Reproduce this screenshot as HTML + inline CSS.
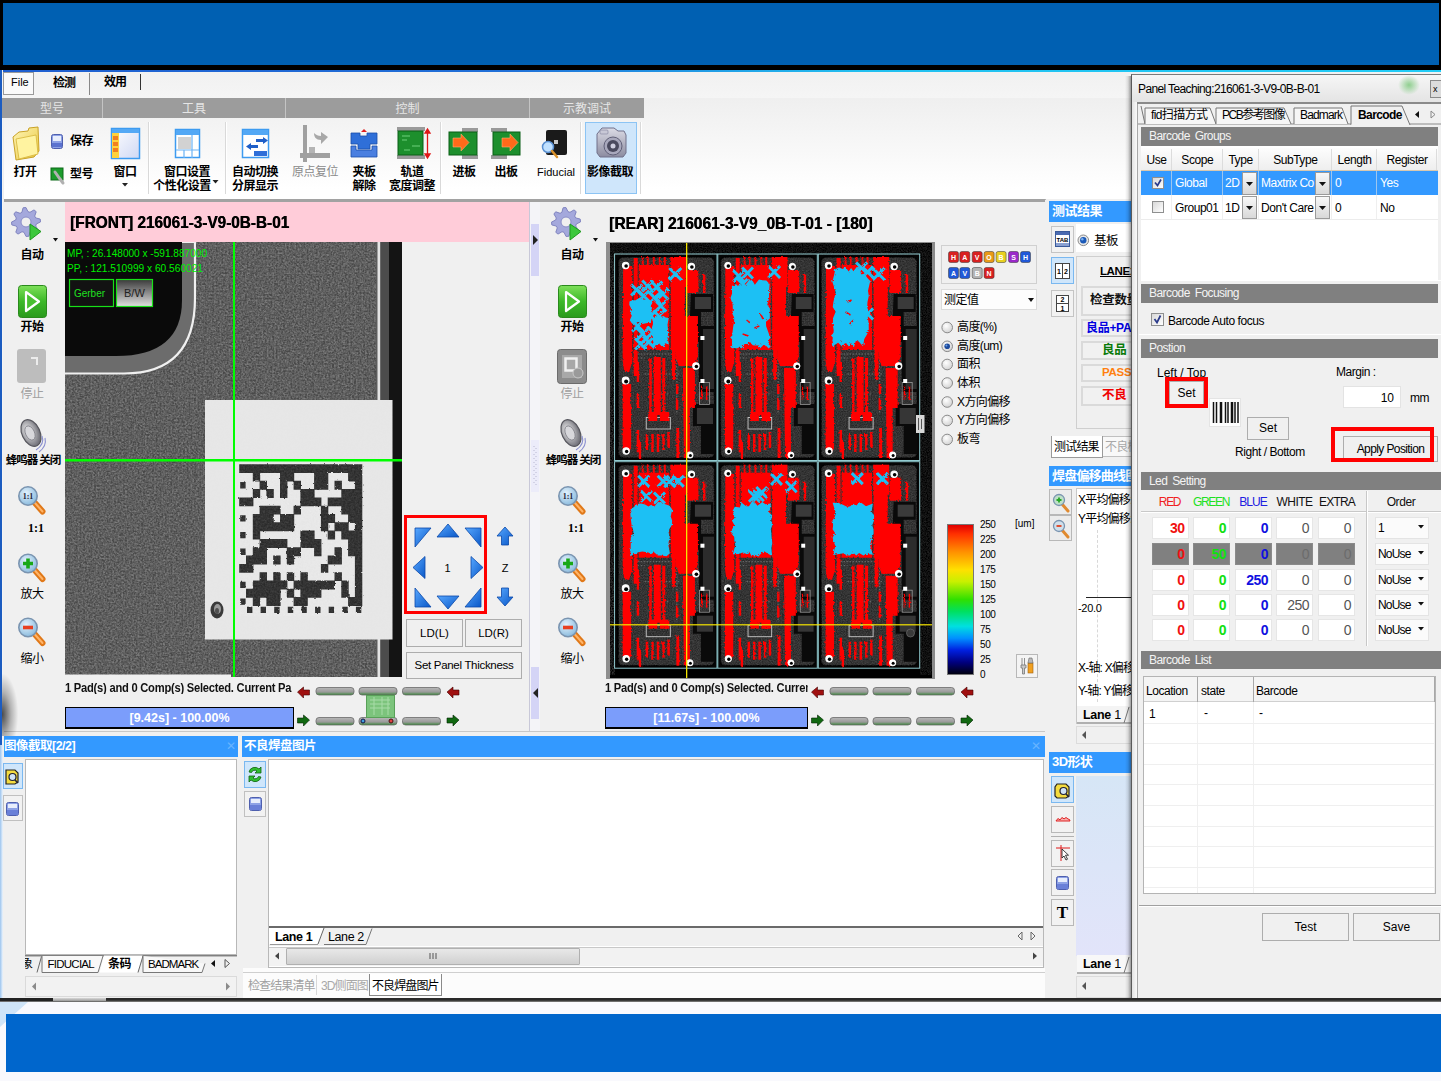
<!DOCTYPE html>
<html lang="zh"><head><meta charset="utf-8"><title>SPI Panel Teaching</title>
<style>
*{box-sizing:border-box;margin:0;padding:0}
html,body{width:1441px;height:1081px;overflow:hidden;background:#f2f2f4}
body{font-family:"Liberation Sans","Noto Sans CJK SC",sans-serif;font-size:12px;color:#000}
#root{position:relative;width:1441px;height:1081px;overflow:hidden;background:#f0f0f0}
.a{position:absolute}
.t{position:absolute;white-space:nowrap;line-height:1}
.c{text-align:center}
svg{position:absolute;overflow:visible}
.ghead{position:absolute;background:#808080;color:#f4f4f4;font-size:12px;line-height:19px;padding-left:8px;letter-spacing:-.55px;word-spacing:2px}
.ptitle{position:absolute;background:#3399ff;color:#fff;font-weight:bold;font-size:12px;line-height:18px;padding-left:3px;white-space:nowrap;overflow:hidden}
.btn{position:absolute;border:1px solid #adadad;background:#f0f0f0;text-align:center;font-size:12px;white-space:nowrap}
.ibox{position:absolute;border:1px solid #e3e3e3;background:#fff;text-align:right;font-size:14px;padding-right:5px;line-height:21px}
.rl{position:absolute;white-space:nowrap;font-size:12px;line-height:14px;text-align:center;transform:translateX(-50%);font-weight:bold;letter-spacing:-.5px}
.rsep{position:absolute;top:122px;width:1px;height:72px;background:#d9d9d9;border-right:1px solid #fff;box-sizing:content-box}
.gh{position:absolute;top:98px;height:20px;background:#9c9c9c;color:#e6e6e6;font-size:12px;line-height:22px;text-align:center;border-right:1px solid #c4c4c4}
.tl{position:absolute;white-space:nowrap;font-size:12px;line-height:14px;text-align:center;transform:translateX(-50%);letter-spacing:-.5px}

</style></head>
<body>
<div id="root">
<!-- 10_frame.html -->
<!-- top / bottom bands -->
<div class="a" style="left:0;top:0;width:1441px;height:70px;background:#000"></div>
<div class="a" style="left:3px;top:3px;width:1436px;height:62px;background:#0060b2"></div>
<div class="a" style="left:3px;top:70px;width:1438px;height:2px;background:linear-gradient(to right,#1f5fd0,#2070d8 35%,#22c0f0 60%,#22ccf6)"></div>
<div class="a" style="left:0;top:70px;width:2px;height:675px;background:#1c5cc0"></div>
<div class="a" style="left:2px;top:72px;width:1px;height:926px;background:#f4f4f4"></div>
<!-- menu bar -->
<div class="a" style="left:4px;top:72px;width:1437px;height:26px;background:linear-gradient(#f1f1f1,#f5f5f5)"></div>
<!-- ribbon bg -->
<div class="a" style="left:4px;top:98px;width:1437px;height:101px;background:linear-gradient(#efefef,#f5f5f5 35%,#ffffff 90%)"></div>
<div class="a" style="left:4px;top:199px;width:1042px;height:3px;background:#a2a2a2"></div>
<!-- main bg -->
<div class="a" style="left:4px;top:202px;width:1128px;height:796px;background:#f0f0f0"></div>
<div class="a" style="left:1045px;top:199px;width:1px;height:533px;background:#b4b4b4"></div>
<!-- bottom -->
<div class="a" style="left:0;top:1002px;width:1441px;height:79px;background:#f9f9fd"></div>
<div class="a" style="left:0;top:998px;width:1441px;height:4px;background:linear-gradient(#2a2a2a 55%,#8a8a8a)"></div>
<div class="a" style="left:6px;top:1014px;width:1435px;height:58px;background:#0066cc"></div>

<!-- 20_ribbon.html -->
<!-- menu -->
<div class="a" style="left:3px;top:72px;width:31px;height:23px;border:1px solid #9a9a9a;background:#fafafa"></div>
<div class="t" style="left:11px;top:77px;font-size:11px">File</div>
<div class="t" style="left:53px;top:77px;font-size:12px;font-weight:bold;letter-spacing:-1px">检测</div>
<div class="t" style="left:104px;top:76px;font-size:12px;font-weight:bold;letter-spacing:-1px">效用</div>
<div class="a" style="left:89px;top:73px;width:1px;height:22px;background:#888"></div>
<div class="a" style="left:140px;top:74px;width:1px;height:16px;background:#333"></div>
<!-- ribbon group headers -->
<div class="gh" style="left:2px;width:101px">型号</div>
<div class="gh" style="left:103px;width:183px">工具</div>
<div class="gh" style="left:286px;width:244px">控制</div>
<div class="gh" style="left:530px;width:114px;border-right:none">示教调试</div>
<!-- separators -->
<div class="rsep" style="left:148px"></div>
<div class="rsep" style="left:225px"></div>
<div class="rsep" style="left:440px"></div>
<div class="rsep" style="left:580px"></div>
<div class="rsep" style="left:640px"></div>
<!-- highlighted button -->
<div class="a" style="left:585px;top:122px;width:52px;height:72px;background:#cfe6fb;border:1px solid #8cc4f4"></div>
<!-- labels -->
<div class="rl" style="left:25px;top:165px">打开</div>
<div class="t" style="left:70px;top:135px;font-size:12px;font-weight:bold;letter-spacing:-.5px">保存</div>
<div class="t" style="left:70px;top:168px;font-size:12px;font-weight:bold;letter-spacing:-.5px">型号</div>
<div class="rl" style="left:125px;top:165px">窗口</div>
<div class="rl" style="left:187px;top:165px">窗口设置</div><div class="rl" style="left:182px;top:179px">个性化设置</div>
<div class="rl" style="left:255px;top:165px">自动切换<br>分屏显示</div>
<div class="rl" style="left:315px;top:165px;color:#8a8a8a;font-weight:normal">原点复位</div>
<div class="rl" style="left:364px;top:165px">夹板<br>解除</div>
<div class="rl" style="left:412px;top:165px">轨道<br>宽度调整</div>
<div class="rl" style="left:464px;top:165px">进板</div>
<div class="rl" style="left:506px;top:165px">出板</div>
<div class="rl" style="left:556px;top:165px;font-weight:normal;font-size:11px;letter-spacing:0">Fiducial</div>
<div class="rl" style="left:610px;top:165px">影像截取</div>
<!-- ribbon icons -->
<svg style="left:0;top:0" width="660" height="200" viewBox="0 0 660 200">
 <defs>
  <linearGradient id="gFold" x1="0" y1="0" x2="1" y2="1"><stop offset="0" stop-color="#fff6b8"/><stop offset="1" stop-color="#e9c63c"/></linearGradient>
  <linearGradient id="gWin" x1="0" y1="0" x2="1" y2="1"><stop offset="0" stop-color="#ffffff"/><stop offset="1" stop-color="#cfd8f4"/></linearGradient>
  <linearGradient id="gCam" x1="0" y1="0" x2="0" y2="1"><stop offset="0" stop-color="#dcdce6"/><stop offset="1" stop-color="#8c8ca0"/></linearGradient>
 </defs>
 <!-- dropdown arrows -->
 <path d="M122 183h6l-3 3.5z" fill="#222"/>
 <path d="M212.500 180h6l-3 3.500z" fill="#222"/>
 <!-- folder -->
 <path d="M13 137l6-5 9-1 1-3 9-1 1 24-5 6-18 3z" fill="url(#gFold)" stroke="#c9a227" stroke-width="1"/>
 <path d="M16 139l20-4 2 19-19 5z" fill="#fff3a0" stroke="#d6b53a" stroke-width=".8"/>
 <!-- save icon -->
 <rect x="51.500" y="134.500" width="11" height="14" rx="2" fill="#8ea2e6" stroke="#4e5fae"/>
 <rect x="53" y="136" width="8" height="5" fill="#e8eefc"/>
 <rect x="52" y="143" width="10" height="4" fill="#5b72cf"/>
 <!-- model icon -->
 <rect x="51" y="168" width="12" height="12" fill="#1c9b2c" stroke="#0c6a18"/>
 <path d="M55 172l5 7 3 4" stroke="#b0b0b0" stroke-width="3" fill="none" stroke-linecap="round"/>
 <!-- window icon -->
 <rect x="111.500" y="128.500" width="28" height="30" fill="url(#gWin)" stroke="#3d9bf0" stroke-width="1.5"/>
 <rect x="112" y="129" width="27" height="4" fill="#53a8f5"/>
 <rect x="112" y="133" width="7" height="25" fill="#ffd23c"/>
 <rect x="113" y="136" width="5" height="4" fill="#f08020"/><rect x="113" y="142" width="5" height="4" fill="#f08020"/><rect x="113" y="148" width="5" height="4" fill="#f08020"/>
 <!-- window settings icon -->
 <rect x="175.500" y="129.500" width="24" height="28" fill="#fff" stroke="#3d9bf0" stroke-width="1.5"/>
 <rect x="176" y="130" width="23" height="5" fill="#53a8f5"/>
 <rect x="178" y="137" width="13" height="12" fill="#d2d2d2"/>
 <path d="M176 150h23M192 135v23M184 150v8" stroke="#6db4f5" stroke-width="1.2"/>
 <!-- auto switch icon -->
 <rect x="242.500" y="129.500" width="26" height="28" fill="#fff" stroke="#3d9bf0" stroke-width="1.5"/>
 <rect x="243" y="130" width="25" height="5" fill="#53a8f5"/>
 <path d="M256 139h7v-2l5 3.500-5 3.500v-2h-7z" fill="#1f5fc8"/>
 <path d="M255 147h-7v2l-5-3.500 5-3.500v2h7z" fill="#1f5fc8" transform="translate(3,1)"/>
 <rect x="254" y="151" width="13" height="5" fill="#2f6fd8"/>
 <!-- origin reset (gray) -->
 <path d="M303 125h4v28h23v5h-23v4h-4v-4h-3v-5h3z" fill="#a0a0a0"/>
 <rect x="309" y="147" width="6" height="6" fill="#b4b4b4"/>
 <path d="M314 141l7-7v4c5 0 7 3 7 7-2-2-4-3-7-3v4z" fill="#a8a8a8" transform="rotate(180 321 139)"/>
 <!-- clamp icon -->
 <path d="M351 133h9v3h7v-3h10v11h-7v5h-12v-5h-7z" fill="#2f6fd8" stroke="#1b4faa" stroke-width=".8"/>
 <path d="M351 146h5v4h16v-4h5v11h-26z" fill="#4a7fe0" stroke="#1b4faa" stroke-width=".8"/>
 <path d="M361 132l3-3 3 3z" fill="#e02020"/>
 <!-- rail width icon -->
 <rect x="397" y="127" width="28" height="4" fill="#9a9a9a"/><rect x="397" y="155" width="28" height="4" fill="#9a9a9a"/>
 <rect x="398" y="131" width="25" height="24" fill="#1d8f2d" stroke="#0b5f17"/>
 <path d="M402 136h8M402 140h5M412 146h8M404 150h6" stroke="#6fd07c" stroke-width="1"/>
 <path d="M427.500 130v27M425 133l2.500-4 2.500 4zM425 154l2.500 4 2.500-4z" stroke="#e01818" fill="#e01818" stroke-width="1.3"/>
 <!-- board in -->
 <rect x="462" y="128" width="16" height="4" fill="#9a9a9a"/><rect x="462" y="155" width="16" height="4" fill="#9a9a9a"/>
 <rect x="449" y="132" width="28" height="23" fill="#1d8f2d" stroke="#0b5f17"/>
 <path d="M453 138h8v-4l8 8.500-8 8.500v-4h-8z" fill="#ff6a1a" stroke="#ffb070" stroke-width=".6"/>
 <!-- board out -->
 <rect x="491" y="128" width="16" height="4" fill="#9a9a9a"/><rect x="491" y="155" width="16" height="4" fill="#9a9a9a"/>
 <rect x="493" y="132" width="27" height="23" fill="#1d8f2d" stroke="#0b5f17"/>
 <path d="M502 138h8v-4l8 8.500-8 8.500v-4h-8z" fill="#ff6a1a" stroke="#ffb070" stroke-width=".6"/>
 <!-- fiducial -->
 <rect x="546" y="130" width="21" height="25" rx="2" fill="#1a1a1a"/>
 <rect x="554" y="140" width="4" height="4" fill="#c8c8c8"/>
 <circle cx="548" cy="147" r="5.500" fill="#bfe0ff" stroke="#5a8fd0" stroke-width="1.5"/>
 <path d="M552 151l5 6" stroke="#d8902a" stroke-width="2.500" stroke-linecap="round"/>
 <!-- camera -->
 <path d="M597 134l5-6h12l4 3h6l2 4v18l-3 4h-23l-3-4z" fill="url(#gCam)" stroke="#70708a" stroke-width="1"/>
 <circle cx="613" cy="146" r="9" fill="#a8a8bc" stroke="#606078"/>
 <circle cx="613" cy="146" r="6" fill="#4a4a5e"/>
 <circle cx="613" cy="146" r="2.500" fill="#d0d0e0"/>
 <rect x="600" y="130" width="8" height="4" rx="1" fill="#c8c8d6" stroke="#80809a" stroke-width=".6"/>
</svg>

<!-- 30_front.html -->

<!-- FRONT panel -->
<div class="a" style="left:65px;top:202px;width:464px;height:40px;background:#ffccd9"></div>
<div class="t" id="ftitle" style="left:69.500px;top:213.500px;font-weight:bold;font-size:17px;text-shadow:.5px 0 0 #000;transform-origin:0 50%;transform:scaleX(.902)">[FRONT] 216061-3-V9-0B-B-01</div>
<svg style="left:65px;top:242px" width="337" height="435" viewBox="65 242 337 435">
 <defs>
  <filter id="nz" x="0" y="0" width="100%" height="100%"><feTurbulence type="fractalNoise" baseFrequency="0.55" numOctaves="2" seed="3" result="n"/><feColorMatrix in="n" type="matrix" values="0 0 0 0 1  0 0 0 0 1  0 0 0 0 1  1.1 1.1 1.1 0 -1.2" result="g"/><feComposite in="g" in2="SourceGraphic" operator="in"/></filter>
  <filter id="rough"><feTurbulence type="fractalNoise" baseFrequency="0.35" numOctaves="2" seed="7" result="t"/><feDisplacementMap in="SourceGraphic" in2="t" scale="2.2"/></filter>
  <clipPath id="cimg"><rect x="65" y="242" width="337" height="435"/></clipPath>
 </defs>
 <g clip-path="url(#cimg)">
 <rect x="65" y="242" width="337" height="435" fill="#484848"/>
 <rect x="65" y="242" width="337" height="435" fill="#fff" opacity=".28" filter="url(#nz)"/>
 <!-- dark slot top-left -->
 <path d="M65 242H195V298Q195 373.500 124 373.500H65z" fill="#6c6c6c"/>
 <path d="M65 242H195V298Q195 373.500 124 373.500H65" fill="none" stroke="#f0f0f0" stroke-width="2.200"/>
 <path d="M65 242H182V300Q182 356 116 356H65z" fill="#0a0a0a"/>
 <!-- right edge -->
 <rect x="376" y="242" width="16" height="435" fill="#5c5c5c"/>
 <rect x="377.500" y="242" width="2.600" height="435" fill="#e4e4e4"/>
 <rect x="381" y="242" width="9" height="435" fill="#4c4c4c"/>
 <rect x="389" y="242" width="13" height="435" fill="#141414"/>
 <!-- label -->
 <rect x="205" y="400" width="187.500" height="239.500" fill="#e6e6e6"/>
 <rect x="205" y="400" width="187.500" height="239.500" fill="#000" opacity=".05" filter="url(#nz)"/>
 <g filter="url(#rough)"><path d="M239.2 464.2h123.1v8.9h-123.1zM252.8 472.5h7.4v8.9h-7.4zM280.0 472.5h14.2v8.9h-14.2zM314.1 472.5h14.2v8.9h-14.2zM348.1 472.5h14.2v8.9h-14.2zM240.2 482.1h5.4v6.3h-5.4zM259.6 480.8h7.4v8.9h-7.4zM280.0 480.8h7.4v8.9h-7.4zM293.6 480.8h7.4v8.9h-7.4zM314.1 480.8h14.2v8.9h-14.2zM334.5 480.8h7.4v8.9h-7.4zM354.9 480.8h7.4v8.9h-7.4zM252.8 489.1h7.4v8.9h-7.4zM266.4 489.1h7.4v8.9h-7.4zM280.0 489.1h7.4v8.9h-7.4zM300.4 489.1h14.2v8.9h-14.2zM341.3 489.1h21.0v8.9h-21.0zM239.2 497.4h14.2v8.9h-14.2zM300.4 497.4h21.0v8.9h-21.0zM327.7 497.4h34.6v8.9h-34.6zM259.6 505.7h21.0v8.9h-21.0zM293.6 505.7h7.4v8.9h-7.4zM320.9 505.7h7.4v8.9h-7.4zM341.3 505.7h21.0v8.9h-21.0zM240.2 515.3h5.4v6.3h-5.4zM252.8 514.0h21.0v8.9h-21.0zM280.0 514.0h14.2v8.9h-14.2zM320.9 514.0h14.2v8.9h-14.2zM348.1 514.0h14.2v8.9h-14.2zM252.8 522.3h41.4v8.9h-41.4zM320.9 522.3h7.4v8.9h-7.4zM334.5 522.3h14.2v8.9h-14.2zM354.9 522.3h7.4v8.9h-7.4zM240.2 531.9h5.4v6.3h-5.4zM252.8 530.6h7.4v8.9h-7.4zM300.4 530.6h14.2v8.9h-14.2zM327.7 530.6h7.4v8.9h-7.4zM341.3 530.6h21.0v8.9h-21.0zM259.6 539.0h27.8v8.9h-27.8zM300.4 539.0h21.0v8.9h-21.0zM348.1 539.0h14.2v8.9h-14.2zM240.2 548.6h5.4v6.3h-5.4zM252.8 547.3h14.2v8.9h-14.2zM286.8 547.3h14.2v8.9h-14.2zM314.1 547.3h7.4v8.9h-7.4zM334.5 547.3h7.4v8.9h-7.4zM348.1 547.3h14.2v8.9h-14.2zM246.0 555.6h21.0v8.9h-21.0zM273.2 555.6h7.4v8.9h-7.4zM286.8 555.6h7.4v8.9h-7.4zM327.7 555.6h14.2v8.9h-14.2zM354.9 555.6h7.4v8.9h-7.4zM239.2 563.9h14.2v8.9h-14.2zM320.9 563.9h7.4v8.9h-7.4zM354.9 563.9h7.4v8.9h-7.4zM259.6 572.2h7.4v8.9h-7.4zM273.2 572.2h7.4v8.9h-7.4zM286.8 572.2h7.4v8.9h-7.4zM300.4 572.2h7.4v8.9h-7.4zM334.5 572.2h7.4v8.9h-7.4zM354.9 572.2h7.4v8.9h-7.4zM240.2 581.8h5.4v6.3h-5.4zM252.8 580.5h34.6v8.9h-34.6zM293.6 580.5h41.4v8.9h-41.4zM341.3 580.5h7.4v8.9h-7.4zM354.9 580.5h7.4v8.9h-7.4zM246.0 588.8h34.6v8.9h-34.6zM286.8 588.8h7.4v8.9h-7.4zM300.4 588.8h21.0v8.9h-21.0zM341.3 588.8h7.4v8.9h-7.4zM354.9 588.8h7.4v8.9h-7.4zM240.2 598.4h5.4v6.3h-5.4zM252.8 597.1h7.4v8.9h-7.4zM266.4 597.1h14.2v8.9h-14.2zM293.6 597.1h14.2v8.9h-14.2zM348.1 597.1h14.2v8.9h-14.2zM247.0 606.7h5.4v6.3h-5.4zM260.6 606.7h5.4v6.3h-5.4zM274.2 606.7h5.4v6.3h-5.4zM287.8 606.7h5.4v6.3h-5.4zM301.4 606.7h5.4v6.3h-5.4zM315.1 606.7h5.4v6.3h-5.4zM328.7 606.7h5.4v6.3h-5.4zM342.3 606.7h5.4v6.3h-5.4zM355.9 606.7h5.4v6.3h-5.4z" fill="#2a2a2a"/></g>
 <rect x="238" y="463" width="126" height="153" fill="#fff" opacity=".1" filter="url(#nz)"/>
 <ellipse cx="217" cy="610" rx="6.500" ry="8.500" fill="#3a3a3a"/><ellipse cx="217.500" cy="609" rx="3.500" ry="5" fill="#9a9a9a"/><ellipse cx="217" cy="611" rx="2" ry="3" fill="#505050"/>
 <rect x="65" y="674.500" width="166" height="3" fill="#f0f0f0"/>
 <!-- crosshair -->
 <rect x="233" y="242" width="2" height="435" fill="#00ff00"/>
 <rect x="65" y="459" width="337" height="2.500" fill="#00ff00"/>
 <!-- overlay buttons -->
 <rect x="69.500" y="279.500" width="44" height="27" fill="#2a2a2a" fill-opacity=".25" stroke="#18e018" stroke-width="1.2"/>
 <linearGradient id="gbw" x1="0" y1="0" x2="0" y2="1"><stop offset="0" stop-color="#3a3a3a"/><stop offset="1" stop-color="#e0e0e0"/></linearGradient>
 <rect x="116.500" y="279.500" width="36" height="27" fill="url(#gbw)" stroke="#18e018" stroke-width="1.2"/>
 <text x="67" y="257" font-size="11" fill="#00f000" font-family="Liberation Sans, sans-serif" textLength="140" lengthAdjust="spacingAndGlyphs">MP, : 26.148000 x -591.887000</text>
 <text x="67" y="271.500" font-size="11" fill="#00f000" font-family="Liberation Sans, sans-serif" textLength="136" lengthAdjust="spacingAndGlyphs">PP, : 121.510999 x 60.560021</text>
 <text x="74" y="297" font-size="11" fill="#20e020" font-family="Liberation Sans, sans-serif" textLength="31" lengthAdjust="spacingAndGlyphs">Gerber</text>
 <text x="124" y="297" font-size="11" fill="#222" font-family="Liberation Sans, sans-serif">B/W</text>
 </g>
</svg>

<!-- 32_tools.html -->
<div class="tl" style="left:32px;top:248px;font-weight:bold">自动</div><div class="tl" style="left:32px;top:320px;font-weight:bold">开始</div><div class="tl" style="left:32px;top:387px;color:#a0a0a0">停止</div><div class="tl" style="left:33px;top:453px;font-weight:bold;letter-spacing:-1px;font-size:11.500px">蜂鸣器 关闭</div><div class="tl" style="left:36px;top:521px;font-weight:bold;font-family:'Liberation Serif',serif;letter-spacing:0">1:1</div><div class="tl" style="left:32px;top:587px">放大</div><div class="tl" style="left:32px;top:652px">缩小</div><svg style="left:0px;top:200px" width="66" height="480" viewBox="0 200 66 480"><path d="M40.2 219.1L40.5 221.9L36.3 224.0L35.7 226.0L38.1 230.0L36.3 232.2L31.9 230.7L30.1 231.7L28.9 236.2L26.1 236.5L24.0 232.3L22.0 231.7L18.0 234.1L15.8 232.3L17.3 227.9L16.3 226.1L11.8 224.9L11.5 222.1L15.7 220.0L16.3 218.0L13.9 214.0L15.7 211.8L20.1 213.3L21.9 212.3L23.1 207.8L25.9 207.5L28.0 211.7L30.0 212.3L34.0 209.9L36.2 211.7L34.7 216.1L35.7 217.9z" fill="#a4a8dc" stroke="#8084c0" stroke-width="1" stroke-linejoin="round"/><circle cx="26" cy="222" r="5" fill="#f0f0f0" stroke="#8a8ec8"/><path d="M30 224l11 7.500-11 8.500z" fill="#3cc83c" stroke="#1e9a1e" stroke-width="1" stroke-linejoin="round"/><path d="M53 238h5l-2.500 3.500z" fill="#111"/><defs><linearGradient id="gp0" x1="0" y1="0" x2="0" y2="1"><stop offset="0" stop-color="#7ee05a"/><stop offset=".5" stop-color="#3cb828"/><stop offset="1" stop-color="#2a9a1c"/></linearGradient><radialGradient id="gs0" cx=".4" cy=".4" r=".6"><stop offset="0" stop-color="#f4f4f4"/><stop offset="1" stop-color="#707078"/></radialGradient><radialGradient id="gm0" cx=".4" cy=".35" r=".7"><stop offset="0" stop-color="#e4f2fc"/><stop offset="1" stop-color="#86b8dc"/></radialGradient></defs><rect x="18.500" y="285.500" width="28" height="32" rx="3" fill="url(#gp0)" stroke="#2a8a1c"/><path d="M26 292l13 9.500-13 9.500z" fill="#48c030" stroke="#fff" stroke-width="2.200" stroke-linejoin="round"/><rect x="17" y="349" width="29" height="34" rx="3" fill="#bdbdbd"/><path d="M31 358h6v7" fill="none" stroke="#ececec" stroke-width="2"/><ellipse cx="31" cy="433" rx="9" ry="14" transform="rotate(-25 31 433)" fill="url(#gs0)" stroke="#55555c" stroke-width="1.2"/><ellipse cx="30" cy="433" rx="4.500" ry="7.500" transform="rotate(-25 30 433)" fill="#d8d8dc" stroke="#808088" stroke-width=".8"/><path d="M42 436q3 8-6 14M45 438q2 8-6 14" fill="none" stroke="#8a90d0" stroke-width="1.1"/><path d="M35 503l7.500 8.500" stroke="#e07818" stroke-width="6" stroke-linecap="round"/><path d="M35 503l7.500 8.500" stroke="#ffb468" stroke-width="2" stroke-linecap="round"/><circle cx="28" cy="496" r="9.200" fill="url(#gm0)" stroke="#7a94b0" stroke-width="1.600"/><text x="28" y="499" font-size="8" font-weight="bold" text-anchor="middle" fill="#223" font-family="Liberation Serif, serif">1:1</text><path d="M35 570.5l7.500 8.500" stroke="#e07818" stroke-width="6" stroke-linecap="round"/><path d="M35 570.5l7.500 8.500" stroke="#ffb468" stroke-width="2" stroke-linecap="round"/><circle cx="28" cy="563.5" r="9.200" fill="url(#gm0)" stroke="#7a94b0" stroke-width="1.600"/><path d="M23 563.5h10M28 558.5v10" stroke="#18a818" stroke-width="3.600"/><path d="M35 634.5l7.500 8.500" stroke="#e07818" stroke-width="6" stroke-linecap="round"/><path d="M35 634.5l7.500 8.500" stroke="#ffb468" stroke-width="2" stroke-linecap="round"/><circle cx="28" cy="627.5" r="9.200" fill="url(#gm0)" stroke="#7a94b0" stroke-width="1.600"/><path d="M23 627.5h10" stroke="#e84020" stroke-width="3.600"/></svg>
<div class="tl" style="left:572px;top:248px;font-weight:bold">自动</div><div class="tl" style="left:572px;top:320px;font-weight:bold">开始</div><div class="tl" style="left:572px;top:387px;color:#a0a0a0">停止</div><div class="tl" style="left:573px;top:453px;font-weight:bold;letter-spacing:-1px;font-size:11.500px">蜂鸣器 关闭</div><div class="tl" style="left:576px;top:521px;font-weight:bold;font-family:'Liberation Serif',serif;letter-spacing:0">1:1</div><div class="tl" style="left:572px;top:587px">放大</div><div class="tl" style="left:572px;top:652px">缩小</div><svg style="left:540px;top:200px" width="66" height="480" viewBox="0 200 66 480"><path d="M40.2 219.1L40.5 221.9L36.3 224.0L35.7 226.0L38.1 230.0L36.3 232.2L31.9 230.7L30.1 231.7L28.9 236.2L26.1 236.5L24.0 232.3L22.0 231.7L18.0 234.1L15.8 232.3L17.3 227.9L16.3 226.1L11.8 224.9L11.5 222.1L15.7 220.0L16.3 218.0L13.9 214.0L15.7 211.8L20.1 213.3L21.9 212.3L23.1 207.8L25.9 207.5L28.0 211.7L30.0 212.3L34.0 209.9L36.2 211.7L34.7 216.1L35.7 217.9z" fill="#a4a8dc" stroke="#8084c0" stroke-width="1" stroke-linejoin="round"/><circle cx="26" cy="222" r="5" fill="#f0f0f0" stroke="#8a8ec8"/><path d="M30 224l11 7.500-11 8.500z" fill="#3cc83c" stroke="#1e9a1e" stroke-width="1" stroke-linejoin="round"/><path d="M53 238h5l-2.500 3.500z" fill="#111"/><defs><linearGradient id="gp540" x1="0" y1="0" x2="0" y2="1"><stop offset="0" stop-color="#7ee05a"/><stop offset=".5" stop-color="#3cb828"/><stop offset="1" stop-color="#2a9a1c"/></linearGradient><radialGradient id="gs540" cx=".4" cy=".4" r=".6"><stop offset="0" stop-color="#f4f4f4"/><stop offset="1" stop-color="#707078"/></radialGradient><radialGradient id="gm540" cx=".4" cy=".35" r=".7"><stop offset="0" stop-color="#e4f2fc"/><stop offset="1" stop-color="#86b8dc"/></radialGradient></defs><rect x="18.500" y="285.500" width="28" height="32" rx="3" fill="url(#gp540)" stroke="#2a8a1c"/><path d="M26 292l13 9.500-13 9.500z" fill="#48c030" stroke="#fff" stroke-width="2.200" stroke-linejoin="round"/><rect x="17.500" y="349.500" width="29" height="34" rx="3" fill="#8c8c8c" stroke="#6c6c6c"/><rect x="22" y="355" width="20" height="23" fill="#a8a8a8"/><rect x="25.500" y="358.500" width="11" height="12" fill="none" stroke="#f0f0f0" stroke-width="2.500"/><circle cx="38" cy="373" r="5" fill="#9a9a9a" stroke="#c8c8c8"/><ellipse cx="31" cy="433" rx="9" ry="14" transform="rotate(-25 31 433)" fill="url(#gs540)" stroke="#55555c" stroke-width="1.2"/><ellipse cx="30" cy="433" rx="4.500" ry="7.500" transform="rotate(-25 30 433)" fill="#d8d8dc" stroke="#808088" stroke-width=".8"/><path d="M42 436q3 8-6 14M45 438q2 8-6 14" fill="none" stroke="#8a90d0" stroke-width="1.1"/><path d="M35 503l7.500 8.500" stroke="#e07818" stroke-width="6" stroke-linecap="round"/><path d="M35 503l7.500 8.500" stroke="#ffb468" stroke-width="2" stroke-linecap="round"/><circle cx="28" cy="496" r="9.200" fill="url(#gm540)" stroke="#7a94b0" stroke-width="1.600"/><text x="28" y="499" font-size="8" font-weight="bold" text-anchor="middle" fill="#223" font-family="Liberation Serif, serif">1:1</text><path d="M35 570.5l7.500 8.500" stroke="#e07818" stroke-width="6" stroke-linecap="round"/><path d="M35 570.5l7.500 8.500" stroke="#ffb468" stroke-width="2" stroke-linecap="round"/><circle cx="28" cy="563.5" r="9.200" fill="url(#gm540)" stroke="#7a94b0" stroke-width="1.600"/><path d="M23 563.5h10M28 558.5v10" stroke="#18a818" stroke-width="3.600"/><path d="M35 634.5l7.500 8.500" stroke="#e07818" stroke-width="6" stroke-linecap="round"/><path d="M35 634.5l7.500 8.500" stroke="#ffb468" stroke-width="2" stroke-linecap="round"/><circle cx="28" cy="627.5" r="9.200" fill="url(#gm540)" stroke="#7a94b0" stroke-width="1.600"/><path d="M23 627.5h10" stroke="#e84020" stroke-width="3.600"/></svg>
<!-- 34_ctrl.html -->
<div class="a" style="left:404px;top:515px;width:82.500px;height:99px;border:3.500px solid #ff0000"></div><svg style="left:405px;top:515px" width="120" height="100" viewBox="405 515 120 100"><defs><linearGradient id="gar" x1="0" y1="0" x2="1" y2="1"><stop offset="0" stop-color="#58a8ff"/><stop offset="1" stop-color="#0a58c8"/></linearGradient></defs><g fill="url(#gar)" stroke="#0a48a8" stroke-width=".8" stroke-linejoin="round"><path d="M415 528h16l-16 19z"/><path d="M448 524l11 13h-22z"/><path d="M481 528h-16l16 19z"/><path d="M413 567.500l12-11v22z"/><path d="M483 567.500l-12-11v22z"/><path d="M415 607h16l-16-19z"/><path d="M448 609l11-13h-22z"/><path d="M481 607h-16l16-19z"/><path d="M505 527l8 9h-4.500v9h-7v-9h-4.500z"/><path d="M505 606l8-9h-4.500v-9h-7v9h-4.500z"/></g><text x="447.500" y="572" font-size="11" text-anchor="middle" font-family="Liberation Sans, sans-serif">1</text><text x="505" y="572" font-size="11" text-anchor="middle" font-family="Liberation Sans, sans-serif">Z</text></svg><div class="btn" style="left:406px;top:619px;width:57px;height:28px;line-height:26px;font-size:11.500px">LD(L)</div><div class="btn" style="left:465px;top:619px;width:57px;height:28px;line-height:26px;font-size:11.500px">LD(R)</div><div class="btn" style="left:406px;top:651.500px;width:116px;height:27px;line-height:25px;font-size:11.500px;letter-spacing:-.3px">Set Panel Thickness</div><div class="t" style="left:65px;top:682px;font-size:12px;letter-spacing:-.25px;font-weight:bold;color:#111;transform-origin:0 0;transform:scaleX(.93)"><span style="display:inline-block;width:245px;overflow:hidden">1 Pad(s) and 0 Comp(s) Selected. Current Pa</span></div><div class="a" style="left:65px;top:707px;width:229px;height:22px;background:#7b9dfb;border:1px solid #000;border-bottom-width:2px;color:#fff;font-weight:bold;font-size:12.500px;text-align:center;line-height:20px">[9.42s] - 100.00%</div><svg style="left:296px;top:682px" width="166" height="48" viewBox="296 682 166 48"><defs><linearGradient id="gpill0" x1="0" y1="0" x2="0" y2="1"><stop offset="0" stop-color="#b8b8b8"/><stop offset=".6" stop-color="#9a9a9a"/><stop offset="1" stop-color="#3a8a3a"/></linearGradient></defs><rect x="316" y="687.5" width="38" height="7.500" rx="3" fill="url(#gpill0)" stroke="#6a6a6a" stroke-width=".8"/><rect x="359" y="687.5" width="38" height="7.500" rx="3" fill="url(#gpill0)" stroke="#6a6a6a" stroke-width=".8"/><rect x="402.5" y="687.5" width="38" height="7.500" rx="3" fill="url(#gpill0)" stroke="#6a6a6a" stroke-width=".8"/><rect x="316" y="717.5" width="38" height="7.500" rx="3" fill="url(#gpill0)" stroke="#6a6a6a" stroke-width=".8"/><rect x="359" y="717.5" width="38" height="7.500" rx="3" fill="url(#gpill0)" stroke="#6a6a6a" stroke-width=".8"/><rect x="402.5" y="717.5" width="38" height="7.500" rx="3" fill="url(#gpill0)" stroke="#6a6a6a" stroke-width=".8"/><path d="M297.5 692l6-5v3h6v5h-6v3z" fill="#a01010" stroke="#400" stroke-width=".6"/><path d="M447 692l6-5v3h6v5h-6v3z" fill="#a01010" stroke="#400" stroke-width=".6"/><path d="M309.5 720l-6-5v3h-6v5h6v3z" fill="#106810" stroke="#020" stroke-width=".6"/><path d="M459 720l-6-5v3h-6v5h6v3z" fill="#106810" stroke="#020" stroke-width=".6"/><rect x="366.500" y="695.500" width="28" height="22" fill="#7cc47c" stroke="#58a058"/><path d="M370 700h20M370 704h20M370 708h20M374 697v18M382 697v18M388 697v18" stroke="#a8dca8" stroke-width="1"/><circle cx="363" cy="721" r="2" fill="#40a0e0" stroke="#114"/><circle cx="391" cy="721" r="2" fill="#e04040" stroke="#411"/></svg><div class="t" style="left:605px;top:682px;font-size:12px;letter-spacing:-.25px;font-weight:bold;color:#111;transform-origin:0 0;transform:scaleX(.93)"><span style="display:inline-block;width:218px;overflow:hidden">1 Pad(s) and 0 Comp(s) Selected. Current Pa</span></div><div class="a" style="left:605px;top:707px;width:203px;height:22px;background:#7b9dfb;border:1px solid #000;border-bottom-width:2px;color:#fff;font-weight:bold;font-size:12.500px;text-align:center;line-height:20px">[11.67s] - 100.00%</div><svg style="left:810px;top:682px" width="166" height="48" viewBox="296 682 166 48"><defs><linearGradient id="gpill514" x1="0" y1="0" x2="0" y2="1"><stop offset="0" stop-color="#b8b8b8"/><stop offset=".6" stop-color="#9a9a9a"/><stop offset="1" stop-color="#3a8a3a"/></linearGradient></defs><rect x="316" y="687.5" width="38" height="7.500" rx="3" fill="url(#gpill514)" stroke="#6a6a6a" stroke-width=".8"/><rect x="359" y="687.5" width="38" height="7.500" rx="3" fill="url(#gpill514)" stroke="#6a6a6a" stroke-width=".8"/><rect x="402.5" y="687.5" width="38" height="7.500" rx="3" fill="url(#gpill514)" stroke="#6a6a6a" stroke-width=".8"/><rect x="316" y="717.5" width="38" height="7.500" rx="3" fill="url(#gpill514)" stroke="#6a6a6a" stroke-width=".8"/><rect x="359" y="717.5" width="38" height="7.500" rx="3" fill="url(#gpill514)" stroke="#6a6a6a" stroke-width=".8"/><rect x="402.5" y="717.5" width="38" height="7.500" rx="3" fill="url(#gpill514)" stroke="#6a6a6a" stroke-width=".8"/><path d="M297.5 692l6-5v3h6v5h-6v3z" fill="#a01010" stroke="#400" stroke-width=".6"/><path d="M447 692l6-5v3h6v5h-6v3z" fill="#a01010" stroke="#400" stroke-width=".6"/><path d="M309.5 720l-6-5v3h-6v5h6v3z" fill="#106810" stroke="#020" stroke-width=".6"/><path d="M459 720l-6-5v3h-6v5h6v3z" fill="#106810" stroke="#020" stroke-width=".6"/></svg><div class="a" style="left:529px;top:202px;width:11px;height:530px;background:#f4f4f8;border-left:1px solid #c8c8d8"></div><div class="a" style="left:531px;top:224px;width:8px;height:52px;background:#d4d4f6"></div><div class="a" style="left:531px;top:667px;width:8px;height:52px;background:#d4d4f6"></div><div class="a" style="left:531px;top:440px;width:8px;height:52px;background:#ececfa"></div><svg style="left:529px;top:202px" width="11" height="530" viewBox="529 202 11 530"><path d="M533 235v10l5-5z" fill="#222"/><path d="M538 688v10l-5-5z" fill="#222"/><path d="M534 446v40M536 448v40" stroke="#b8b8d0" stroke-dasharray="1 3"/></svg><div class="a" style="left:4px;top:731px;width:1041px;height:1px;background:#c8c8c8"></div>
<!-- 40_rear.html -->

<!-- REAR panel -->
<div class="t" id="rtitle" style="left:609px;top:214.500px;font-weight:bold;font-size:17px;text-shadow:.5px 0 0 #000;transform-origin:0 50%;transform:scaleX(.914)">[REAR] 216061-3-V9_0B-T-01 - [180]</div>
<div class="a" style="left:606px;top:242px;width:329px;height:437px;background:#8e8e8e;border-right:3px solid #8a8a8a"></div>
<svg style="left:610px;top:243px" width="322" height="435" viewBox="610 243 322 435">
 <defs>
  <filter id="nz2" x="0" y="0" width="100%" height="100%"><feTurbulence type="fractalNoise" baseFrequency="0.8" numOctaves="2" seed="11" result="n"/><feColorMatrix in="n" type="matrix" values="0 0 0 0 1  0 0 0 0 1  0 0 0 0 1  1.2 1.2 1.2 0 -1.3" result="g"/><feComposite in="g" in2="SourceGraphic" operator="in"/></filter>
  <filter id="rough2" x="-5%" y="-5%" width="110%" height="110%"><feTurbulence type="fractalNoise" baseFrequency="0.45" numOctaves="2" seed="4" result="t"/><feDisplacementMap in="SourceGraphic" in2="t" scale="3"/></filter>
  <clipPath id="cpcb"><rect x="610" y="243" width="322" height="435"/></clipPath>

 </defs>
 <g clip-path="url(#cpcb)">
 <rect x="610" y="243" width="322" height="435" fill="#000"/>
 <rect x="610" y="243" width="322" height="12" fill="#fff" opacity=".12" filter="url(#nz2)"/>
 <rect x="610" y="255" width="5" height="420" fill="#fff" opacity=".2" filter="url(#nz2)"/>
 <rect x="920" y="255" width="12" height="420" fill="#fff" opacity=".12" filter="url(#nz2)"/>
 <g transform="translate(614.6,254) scale(1.0039,1)">
<g>
 <rect x="1" y="1" width="101" height="205" fill="#050505"/>
 <rect x="3.500" y="3" width="96" height="201" rx="5" fill="#262626" stroke="#000" stroke-width="1.500"/>
 <rect x="3.500" y="3" width="96" height="201" rx="5" fill="#fff" opacity=".13" filter="url(#nz2)"/>
 <!-- right-side channel shapes -->
 <path d="M76 40h22v18h-12v14h14v66h-16v-50h-10z" fill="#0a0a0a"/>
 <path d="M80 43h16v12h-16z" fill="#3a3a3a"/>
 <path d="M88 75h11v60h-11z" fill="#2c2c2c"/>
 <path d="M78 150h22v50h-14v-28h-8z" fill="#0a0a0a"/>
 <path d="M82 154h16v16h-16z" fill="#363636"/>
 <!-- faint traces -->
 <path d="M20 100h50M20 104h10M30 120h36M62 100v60M34 140h20" stroke="#8a8a8a" stroke-width=".7" stroke-dasharray="1.5 1.5" fill="none"/>
 <rect x="31.500" y="163.500" width="24" height="11.500" fill="none" stroke="#c8c8c8" stroke-width=".9"/>
 <rect x="84.500" y="128.500" width="10" height="22" fill="none" stroke="#9a9a9a" stroke-width=".8"/>
 <g filter="url(#rough2)" fill="#ff0000">
  <path d="M8.500 12h9v96l-3 10h-5l-1.500-12z"/>
  <path d="M8 130h8.500v64l-2 4h-4.500l-2-4z"/>
  <rect x="19" y="4" width="4" height="118"/>
  <rect x="24" y="11" width="30.500" height="85"/>
  <rect x="27" y="3" width="2" height="10"/><rect x="32" y="3" width="2" height="10"/><rect x="38" y="3" width="2" height="10"/><rect x="44" y="3" width="2" height="10"/><rect x="49" y="3" width="2" height="10"/>
  <rect x="55.500" y="3" width="16" height="30"/>
  <rect x="56" y="30" width="14" height="66"/>
  <rect x="57" y="95" width="4" height="30"/>
  <rect x="72" y="16" width="11.500" height="23"/>
  <rect x="88" y="20" width="2.500" height="19"/>
  <path d="M61 62h22v40l-3 10h-16l-3-8z"/>
  <path d="M68 114h12v40h-5v50h-6z"/>
  <rect x="34.500" y="104" width="2.500" height="56"/>
  <rect x="39" y="103" width="7" height="58"/>
  <rect x="47.500" y="104" width="3" height="56"/>
  <rect x="33.500" y="158" width="9" height="9"/><rect x="45" y="158" width="9.500" height="9"/>
  <rect x="22" y="108" width="2.500" height="20"/><rect x="22" y="140" width="2.500" height="14"/><rect x="22" y="176" width="2.500" height="22"/>
  <rect x="24" y="188" width="2.500" height="17"/><rect x="31" y="180" width="2.500" height="16"/><rect x="36.500" y="180" width="2.500" height="18"/><rect x="42" y="180" width="2.500" height="18"/><rect x="47.500" y="180" width="2.500" height="16"/><rect x="52.500" y="178" width="2.500" height="16"/>
  <rect x="61.500" y="174" width="3" height="30"/>
  <rect x="61" y="130" width="2.500" height="10"/><rect x="61" y="144" width="2.500" height="12"/>
  <rect x="86" y="132" width="1.500" height="14"/><rect x="91" y="132" width="1.500" height="14"/>
 </g>
 <g fill="#fff" stroke="#fff">
  <circle cx="11" cy="11.500" r="3.200"/><circle cx="76.500" cy="12.500" r="3.200"/><circle cx="11" cy="126.500" r="3.400"/><circle cx="81" cy="112" r="3.200"/><circle cx="11.500" cy="197" r="3.200"/><circle cx="75" cy="201" r="3"/>
 </g>
 <g fill="#000"><circle cx="11.500" cy="12" r="1.800"/><circle cx="77" cy="13" r="1.800"/><circle cx="11.500" cy="127.500" r="2"/><circle cx="81.500" cy="112.500" r="1.800"/><circle cx="12" cy="197.500" r="1.700"/><circle cx="75.500" cy="201.500" r="1.500"/></g>
 <rect x="85.500" y="82" width="4" height="4" fill="#fff"/><rect x="85.500" y="125" width="4" height="4" fill="#fff"/>
</g>
<g filter="url(#rough2)"><path d="M36.3 57.0L38.1 59.8L37.9 62.7L36.6 65.3L36.1 69.1L32.6 68.9L30.1 69.5L27.7 69.9L25.5 67.9L23.4 67.7L19.8 70.1L17.0 68.9L15.1 66.3L17.1 61.7L15.9 59.5L15.2 57.0L16.5 54.6L14.7 51.1L14.8 47.4L17.9 46.3L21.0 46.3L23.0 44.8L25.3 43.7L27.6 45.2L29.7 45.7L32.6 45.1L35.1 46.3L36.5 48.8L37.0 51.7L37.2 54.4z" fill="#1cc0f4"/><path d="M53.3 77.0L53.2 80.3L52.7 83.7L54.1 90.4L50.3 89.3L48.5 91.0L46.6 92.3L44.6 89.6L42.5 91.1L39.9 91.3L38.5 88.0L37.8 84.1L37.2 80.6L37.7 77.0L37.2 73.4L38.2 70.3L38.1 65.4L40.5 64.3L42.5 63.0L44.4 61.7L46.5 62.8L48.7 62.1L50.8 63.4L53.9 63.9L52.7 70.4L53.0 73.7z" fill="#1cc0f4"/><path d="M16.5 30.5L27.5 41.5M27.5 30.5L16.5 41.5M27.5 26.5L38.5 37.5M38.5 26.5L27.5 37.5M36.5 27.5L47.5 38.5M47.5 27.5L36.5 38.5M23.5 36.5L34.5 47.5M34.5 36.5L23.5 47.5M34.5 38.5L45.5 49.5M45.5 38.5L34.5 49.5M40.5 46.5L51.5 57.5M51.5 46.5L40.5 57.5M38.5 56.5L49.5 67.5M49.5 56.5L38.5 67.5M17.5 66.5L28.5 77.5M28.5 66.5L17.5 77.5M22.5 74.5L33.5 85.5M33.5 74.5L22.5 85.5M32.5 72.5L43.5 83.5M43.5 72.5L32.5 83.5M40.5 68.5L51.5 79.5M51.5 68.5L40.5 79.5M28.5 82.5L39.5 93.5M39.5 82.5L28.5 93.5M38.5 80.5L49.5 91.5M49.5 80.5L38.5 91.5M20.5 84.5L31.5 95.5M31.5 84.5L20.5 95.5M42.5 34.5L53.5 45.5M53.5 34.5L42.5 45.5M30.5 56.5L41.5 67.5M41.5 56.5L30.5 67.5M54.5 14.0L66.5 26.0M66.5 14.0L54.5 26.0" stroke="#1cc0f4" stroke-width="3" fill="none"/></g></g>
 <g transform="translate(717,254) scale(0.9853,1)">
<g>
 <rect x="1" y="1" width="101" height="205" fill="#050505"/>
 <rect x="3.500" y="3" width="96" height="201" rx="5" fill="#262626" stroke="#000" stroke-width="1.500"/>
 <rect x="3.500" y="3" width="96" height="201" rx="5" fill="#fff" opacity=".13" filter="url(#nz2)"/>
 <!-- right-side channel shapes -->
 <path d="M76 40h22v18h-12v14h14v66h-16v-50h-10z" fill="#0a0a0a"/>
 <path d="M80 43h16v12h-16z" fill="#3a3a3a"/>
 <path d="M88 75h11v60h-11z" fill="#2c2c2c"/>
 <path d="M78 150h22v50h-14v-28h-8z" fill="#0a0a0a"/>
 <path d="M82 154h16v16h-16z" fill="#363636"/>
 <!-- faint traces -->
 <path d="M20 100h50M20 104h10M30 120h36M62 100v60M34 140h20" stroke="#8a8a8a" stroke-width=".7" stroke-dasharray="1.5 1.5" fill="none"/>
 <rect x="31.500" y="163.500" width="24" height="11.500" fill="none" stroke="#c8c8c8" stroke-width=".9"/>
 <rect x="84.500" y="128.500" width="10" height="22" fill="none" stroke="#9a9a9a" stroke-width=".8"/>
 <g filter="url(#rough2)" fill="#ff0000">
  <path d="M8.500 12h9v96l-3 10h-5l-1.500-12z"/>
  <path d="M8 130h8.500v64l-2 4h-4.500l-2-4z"/>
  <rect x="19" y="4" width="4" height="118"/>
  <rect x="24" y="11" width="30.500" height="85"/>
  <rect x="27" y="3" width="2" height="10"/><rect x="32" y="3" width="2" height="10"/><rect x="38" y="3" width="2" height="10"/><rect x="44" y="3" width="2" height="10"/><rect x="49" y="3" width="2" height="10"/>
  <rect x="55.500" y="3" width="16" height="30"/>
  <rect x="56" y="30" width="14" height="66"/>
  <rect x="57" y="95" width="4" height="30"/>
  <rect x="72" y="16" width="11.500" height="23"/>
  <rect x="88" y="20" width="2.500" height="19"/>
  <path d="M61 62h22v40l-3 10h-16l-3-8z"/>
  <path d="M68 114h12v40h-5v50h-6z"/>
  <rect x="34.500" y="104" width="2.500" height="56"/>
  <rect x="39" y="103" width="7" height="58"/>
  <rect x="47.500" y="104" width="3" height="56"/>
  <rect x="33.500" y="158" width="9" height="9"/><rect x="45" y="158" width="9.500" height="9"/>
  <rect x="22" y="108" width="2.500" height="20"/><rect x="22" y="140" width="2.500" height="14"/><rect x="22" y="176" width="2.500" height="22"/>
  <rect x="24" y="188" width="2.500" height="17"/><rect x="31" y="180" width="2.500" height="16"/><rect x="36.500" y="180" width="2.500" height="18"/><rect x="42" y="180" width="2.500" height="18"/><rect x="47.500" y="180" width="2.500" height="16"/><rect x="52.500" y="178" width="2.500" height="16"/>
  <rect x="61.500" y="174" width="3" height="30"/>
  <rect x="61" y="130" width="2.500" height="10"/><rect x="61" y="144" width="2.500" height="12"/>
  <rect x="86" y="132" width="1.500" height="14"/><rect x="91" y="132" width="1.500" height="14"/>
 </g>
 <g fill="#fff" stroke="#fff">
  <circle cx="11" cy="11.500" r="3.200"/><circle cx="76.500" cy="12.500" r="3.200"/><circle cx="11" cy="126.500" r="3.400"/><circle cx="81" cy="112" r="3.200"/><circle cx="11.500" cy="197" r="3.200"/><circle cx="75" cy="201" r="3"/>
 </g>
 <g fill="#000"><circle cx="11.500" cy="12" r="1.800"/><circle cx="77" cy="13" r="1.800"/><circle cx="11.500" cy="127.500" r="2"/><circle cx="81.500" cy="112.500" r="1.800"/><circle cx="12" cy="197.500" r="1.700"/><circle cx="75.500" cy="201.500" r="1.500"/></g>
 <rect x="85.500" y="82" width="4" height="4" fill="#fff"/><rect x="85.500" y="125" width="4" height="4" fill="#fff"/>
</g>
<g filter="url(#rough2)"><path d="M53.6 59.5L53.6 64.5L49.7 67.7L49.9 72.3L53.1 81.1L52.6 88.0L49.8 91.9L44.6 89.2L42.0 91.4L39.0 91.4L36.2 91.3L33.5 88.1L30.9 90.1L28.3 89.9L24.8 92.3L20.5 94.3L16.1 94.0L15.2 86.8L15.6 79.3L16.4 72.9L17.4 67.6L17.4 63.5L15.5 59.5L16.1 55.2L15.9 50.6L13.7 44.0L15.3 39.4L15.1 32.1L18.8 30.3L23.2 31.9L25.6 29.6L28.6 31.0L30.9 28.3L33.5 24.7L36.2 27.1L38.4 30.7L42.6 25.4L46.0 26.2L50.1 26.6L53.4 29.9L52.8 38.2L52.9 44.3L51.0 50.7L53.7 54.5z" fill="#1cc0f4"/><path d="M16.5 16.5L27.5 27.5M27.5 16.5L16.5 27.5M25.5 13.5L36.5 24.5M36.5 13.5L25.5 24.5M20.5 24.5L31.5 35.5M31.5 24.5L20.5 35.5M52.0 12.0L64.0 24.0M64.0 12.0L52.0 24.0M14.5 82.5L25.5 93.5M25.5 82.5L14.5 93.5M42.5 82.5L53.5 93.5M53.5 82.5L42.5 93.5" stroke="#1cc0f4" stroke-width="3" fill="none"/><path d="M30 66l4 3M38 74l5-2M44 60l3 5M26 80l6 2" stroke="#ff0000" stroke-width="1.500"/></g></g>
 <g transform="translate(817.5,254) scale(1.0020,1)">
<g>
 <rect x="1" y="1" width="101" height="205" fill="#050505"/>
 <rect x="3.500" y="3" width="96" height="201" rx="5" fill="#262626" stroke="#000" stroke-width="1.500"/>
 <rect x="3.500" y="3" width="96" height="201" rx="5" fill="#fff" opacity=".13" filter="url(#nz2)"/>
 <!-- right-side channel shapes -->
 <path d="M76 40h22v18h-12v14h14v66h-16v-50h-10z" fill="#0a0a0a"/>
 <path d="M80 43h16v12h-16z" fill="#3a3a3a"/>
 <path d="M88 75h11v60h-11z" fill="#2c2c2c"/>
 <path d="M78 150h22v50h-14v-28h-8z" fill="#0a0a0a"/>
 <path d="M82 154h16v16h-16z" fill="#363636"/>
 <!-- faint traces -->
 <path d="M20 100h50M20 104h10M30 120h36M62 100v60M34 140h20" stroke="#8a8a8a" stroke-width=".7" stroke-dasharray="1.5 1.5" fill="none"/>
 <rect x="31.500" y="163.500" width="24" height="11.500" fill="none" stroke="#c8c8c8" stroke-width=".9"/>
 <rect x="84.500" y="128.500" width="10" height="22" fill="none" stroke="#9a9a9a" stroke-width=".8"/>
 <g filter="url(#rough2)" fill="#ff0000">
  <path d="M8.500 12h9v96l-3 10h-5l-1.500-12z"/>
  <path d="M8 130h8.500v64l-2 4h-4.500l-2-4z"/>
  <rect x="19" y="4" width="4" height="118"/>
  <rect x="24" y="11" width="30.500" height="85"/>
  <rect x="27" y="3" width="2" height="10"/><rect x="32" y="3" width="2" height="10"/><rect x="38" y="3" width="2" height="10"/><rect x="44" y="3" width="2" height="10"/><rect x="49" y="3" width="2" height="10"/>
  <rect x="55.500" y="3" width="16" height="30"/>
  <rect x="56" y="30" width="14" height="66"/>
  <rect x="57" y="95" width="4" height="30"/>
  <rect x="72" y="16" width="11.500" height="23"/>
  <rect x="88" y="20" width="2.500" height="19"/>
  <path d="M61 62h22v40l-3 10h-16l-3-8z"/>
  <path d="M68 114h12v40h-5v50h-6z"/>
  <rect x="34.500" y="104" width="2.500" height="56"/>
  <rect x="39" y="103" width="7" height="58"/>
  <rect x="47.500" y="104" width="3" height="56"/>
  <rect x="33.500" y="158" width="9" height="9"/><rect x="45" y="158" width="9.500" height="9"/>
  <rect x="22" y="108" width="2.500" height="20"/><rect x="22" y="140" width="2.500" height="14"/><rect x="22" y="176" width="2.500" height="22"/>
  <rect x="24" y="188" width="2.500" height="17"/><rect x="31" y="180" width="2.500" height="16"/><rect x="36.500" y="180" width="2.500" height="18"/><rect x="42" y="180" width="2.500" height="18"/><rect x="47.500" y="180" width="2.500" height="16"/><rect x="52.500" y="178" width="2.500" height="16"/>
  <rect x="61.500" y="174" width="3" height="30"/>
  <rect x="61" y="130" width="2.500" height="10"/><rect x="61" y="144" width="2.500" height="12"/>
  <rect x="86" y="132" width="1.500" height="14"/><rect x="91" y="132" width="1.500" height="14"/>
 </g>
 <g fill="#fff" stroke="#fff">
  <circle cx="11" cy="11.500" r="3.200"/><circle cx="76.500" cy="12.500" r="3.200"/><circle cx="11" cy="126.500" r="3.400"/><circle cx="81" cy="112" r="3.200"/><circle cx="11.500" cy="197" r="3.200"/><circle cx="75" cy="201" r="3"/>
 </g>
 <g fill="#000"><circle cx="11.500" cy="12" r="1.800"/><circle cx="77" cy="13" r="1.800"/><circle cx="11.500" cy="127.500" r="2"/><circle cx="81.500" cy="112.500" r="1.800"/><circle cx="12" cy="197.500" r="1.700"/><circle cx="75.500" cy="201.500" r="1.500"/></g>
 <rect x="85.500" y="82" width="4" height="4" fill="#fff"/><rect x="85.500" y="125" width="4" height="4" fill="#fff"/>
</g>
<g filter="url(#rough2)"><path d="M49.6 53.0L50.9 58.3L50.2 63.3L51.1 70.0L51.2 77.0L48.9 81.2L46.7 85.1L45.4 92.2L40.9 87.2L38.2 87.0L36.3 93.5L33.5 89.0L30.8 92.2L28.5 89.1L25.4 90.5L23.4 86.3L18.1 90.4L14.8 87.2L16.2 76.4L15.3 70.5L15.6 64.1L18.1 57.7L15.2 53.0L15.9 47.7L17.1 42.9L18.2 38.3L14.8 27.7L16.4 21.8L17.8 14.9L21.5 13.5L25.2 14.9L27.9 13.1L31.1 17.6L33.5 14.1L35.9 17.2L39.1 13.0L42.1 13.5L43.5 20.2L47.1 19.9L49.6 23.7L52.6 27.1L50.4 36.7L51.2 42.0L49.9 48.0z" fill="#1cc0f4"/><path d="M55.0 14.0L67.0 26.0M67.0 14.0L55.0 26.0M44.5 12.5L55.5 23.5M55.5 12.5L44.5 23.5M38.5 8.5L49.5 19.5M49.5 8.5L38.5 19.5M14.5 80.5L25.5 91.5M25.5 80.5L14.5 91.5M44.5 54.5L55.5 65.5M55.5 54.5L44.5 65.5" stroke="#1cc0f4" stroke-width="3" fill="none"/><path d="M28 58l5 3M36 66l-4 4M30 48l4-2" stroke="#ff0000" stroke-width="1.500"/></g></g>
 <g transform="translate(614.6,461.7) scale(1.0039,1)">
<g>
 <rect x="1" y="1" width="101" height="205" fill="#050505"/>
 <rect x="3.500" y="3" width="96" height="201" rx="5" fill="#262626" stroke="#000" stroke-width="1.500"/>
 <rect x="3.500" y="3" width="96" height="201" rx="5" fill="#fff" opacity=".13" filter="url(#nz2)"/>
 <!-- right-side channel shapes -->
 <path d="M76 40h22v18h-12v14h14v66h-16v-50h-10z" fill="#0a0a0a"/>
 <path d="M80 43h16v12h-16z" fill="#3a3a3a"/>
 <path d="M88 75h11v60h-11z" fill="#2c2c2c"/>
 <path d="M78 150h22v50h-14v-28h-8z" fill="#0a0a0a"/>
 <path d="M82 154h16v16h-16z" fill="#363636"/>
 <!-- faint traces -->
 <path d="M20 100h50M20 104h10M30 120h36M62 100v60M34 140h20" stroke="#8a8a8a" stroke-width=".7" stroke-dasharray="1.5 1.5" fill="none"/>
 <rect x="31.500" y="163.500" width="24" height="11.500" fill="none" stroke="#c8c8c8" stroke-width=".9"/>
 <rect x="84.500" y="128.500" width="10" height="22" fill="none" stroke="#9a9a9a" stroke-width=".8"/>
 <g filter="url(#rough2)" fill="#ff0000">
  <path d="M8.500 12h9v96l-3 10h-5l-1.500-12z"/>
  <path d="M8 130h8.500v64l-2 4h-4.500l-2-4z"/>
  <rect x="19" y="4" width="4" height="118"/>
  <rect x="24" y="11" width="30.500" height="85"/>
  <rect x="27" y="3" width="2" height="10"/><rect x="32" y="3" width="2" height="10"/><rect x="38" y="3" width="2" height="10"/><rect x="44" y="3" width="2" height="10"/><rect x="49" y="3" width="2" height="10"/>
  <rect x="55.500" y="3" width="16" height="30"/>
  <rect x="56" y="30" width="14" height="66"/>
  <rect x="57" y="95" width="4" height="30"/>
  <rect x="72" y="16" width="11.500" height="23"/>
  <rect x="88" y="20" width="2.500" height="19"/>
  <path d="M61 62h22v40l-3 10h-16l-3-8z"/>
  <path d="M68 114h12v40h-5v50h-6z"/>
  <rect x="34.500" y="104" width="2.500" height="56"/>
  <rect x="39" y="103" width="7" height="58"/>
  <rect x="47.500" y="104" width="3" height="56"/>
  <rect x="33.500" y="158" width="9" height="9"/><rect x="45" y="158" width="9.500" height="9"/>
  <rect x="22" y="108" width="2.500" height="20"/><rect x="22" y="140" width="2.500" height="14"/><rect x="22" y="176" width="2.500" height="22"/>
  <rect x="24" y="188" width="2.500" height="17"/><rect x="31" y="180" width="2.500" height="16"/><rect x="36.500" y="180" width="2.500" height="18"/><rect x="42" y="180" width="2.500" height="18"/><rect x="47.500" y="180" width="2.500" height="16"/><rect x="52.500" y="178" width="2.500" height="16"/>
  <rect x="61.500" y="174" width="3" height="30"/>
  <rect x="61" y="130" width="2.500" height="10"/><rect x="61" y="144" width="2.500" height="12"/>
  <rect x="86" y="132" width="1.500" height="14"/><rect x="91" y="132" width="1.500" height="14"/>
 </g>
 <g fill="#fff" stroke="#fff">
  <circle cx="11" cy="11.500" r="3.200"/><circle cx="76.500" cy="12.500" r="3.200"/><circle cx="11" cy="126.500" r="3.400"/><circle cx="81" cy="112" r="3.200"/><circle cx="11.500" cy="197" r="3.200"/><circle cx="75" cy="201" r="3"/>
 </g>
 <g fill="#000"><circle cx="11.500" cy="12" r="1.800"/><circle cx="77" cy="13" r="1.800"/><circle cx="11.500" cy="127.500" r="2"/><circle cx="81.500" cy="112.500" r="1.800"/><circle cx="12" cy="197.500" r="1.700"/><circle cx="75.500" cy="201.500" r="1.500"/></g>
 <rect x="85.500" y="82" width="4" height="4" fill="#fff"/><rect x="85.500" y="125" width="4" height="4" fill="#fff"/>
</g>
<g filter="url(#rough2)"><path d="M54.4 67.5L53.8 71.0L55.1 75.3L54.0 79.0L53.6 83.6L55.1 91.6L51.7 94.6L46.9 93.9L43.1 93.7L39.3 90.5L36.5 92.4L33.6 90.8L30.8 90.2L27.7 89.8L23.6 90.5L15.5 94.6L16.0 86.8L16.1 81.0L16.1 76.1L18.8 71.1L18.3 67.5L16.9 63.5L16.4 59.1L15.8 53.9L15.7 48.0L19.3 45.3L22.3 42.2L26.4 41.9L30.3 42.8L33.7 44.7L36.5 43.0L39.2 45.2L43.3 40.3L47.1 40.7L50.5 42.6L54.7 44.0L57.4 47.9L55.9 54.7L57.3 58.8L57.1 63.3z" fill="#1cc0f4"/><path d="M23.5 14.0L34.5 25.0M34.5 14.0L23.5 25.0M42.9 14.0L53.9 25.0M53.9 14.0L42.9 25.0M57.9 14.0L68.9 25.0M68.9 14.0L57.9 25.0M26.1 29.0L37.1 40.0M37.1 29.0L26.1 40.0M39.2 30.8L50.2 41.8M50.2 30.8L39.2 41.8M49.5 14.5L60.5 25.5M60.5 14.5L49.5 25.5" stroke="#1cc0f4" stroke-width="3" fill="none"/></g></g>
 <g transform="translate(717,461.7) scale(0.9853,1)">
<g>
 <rect x="1" y="1" width="101" height="205" fill="#050505"/>
 <rect x="3.500" y="3" width="96" height="201" rx="5" fill="#262626" stroke="#000" stroke-width="1.500"/>
 <rect x="3.500" y="3" width="96" height="201" rx="5" fill="#fff" opacity=".13" filter="url(#nz2)"/>
 <!-- right-side channel shapes -->
 <path d="M76 40h22v18h-12v14h14v66h-16v-50h-10z" fill="#0a0a0a"/>
 <path d="M80 43h16v12h-16z" fill="#3a3a3a"/>
 <path d="M88 75h11v60h-11z" fill="#2c2c2c"/>
 <path d="M78 150h22v50h-14v-28h-8z" fill="#0a0a0a"/>
 <path d="M82 154h16v16h-16z" fill="#363636"/>
 <!-- faint traces -->
 <path d="M20 100h50M20 104h10M30 120h36M62 100v60M34 140h20" stroke="#8a8a8a" stroke-width=".7" stroke-dasharray="1.5 1.5" fill="none"/>
 <rect x="31.500" y="163.500" width="24" height="11.500" fill="none" stroke="#c8c8c8" stroke-width=".9"/>
 <rect x="84.500" y="128.500" width="10" height="22" fill="none" stroke="#9a9a9a" stroke-width=".8"/>
 <g filter="url(#rough2)" fill="#ff0000">
  <path d="M8.500 12h9v96l-3 10h-5l-1.500-12z"/>
  <path d="M8 130h8.500v64l-2 4h-4.500l-2-4z"/>
  <rect x="19" y="4" width="4" height="118"/>
  <rect x="24" y="11" width="30.500" height="85"/>
  <rect x="27" y="3" width="2" height="10"/><rect x="32" y="3" width="2" height="10"/><rect x="38" y="3" width="2" height="10"/><rect x="44" y="3" width="2" height="10"/><rect x="49" y="3" width="2" height="10"/>
  <rect x="55.500" y="3" width="16" height="30"/>
  <rect x="56" y="30" width="14" height="66"/>
  <rect x="57" y="95" width="4" height="30"/>
  <rect x="72" y="16" width="11.500" height="23"/>
  <rect x="88" y="20" width="2.500" height="19"/>
  <path d="M61 62h22v40l-3 10h-16l-3-8z"/>
  <path d="M68 114h12v40h-5v50h-6z"/>
  <rect x="34.500" y="104" width="2.500" height="56"/>
  <rect x="39" y="103" width="7" height="58"/>
  <rect x="47.500" y="104" width="3" height="56"/>
  <rect x="33.500" y="158" width="9" height="9"/><rect x="45" y="158" width="9.500" height="9"/>
  <rect x="22" y="108" width="2.500" height="20"/><rect x="22" y="140" width="2.500" height="14"/><rect x="22" y="176" width="2.500" height="22"/>
  <rect x="24" y="188" width="2.500" height="17"/><rect x="31" y="180" width="2.500" height="16"/><rect x="36.500" y="180" width="2.500" height="18"/><rect x="42" y="180" width="2.500" height="18"/><rect x="47.500" y="180" width="2.500" height="16"/><rect x="52.500" y="178" width="2.500" height="16"/>
  <rect x="61.500" y="174" width="3" height="30"/>
  <rect x="61" y="130" width="2.500" height="10"/><rect x="61" y="144" width="2.500" height="12"/>
  <rect x="86" y="132" width="1.500" height="14"/><rect x="91" y="132" width="1.500" height="14"/>
 </g>
 <g fill="#fff" stroke="#fff">
  <circle cx="11" cy="11.500" r="3.200"/><circle cx="76.500" cy="12.500" r="3.200"/><circle cx="11" cy="126.500" r="3.400"/><circle cx="81" cy="112" r="3.200"/><circle cx="11.500" cy="197" r="3.200"/><circle cx="75" cy="201" r="3"/>
 </g>
 <g fill="#000"><circle cx="11.500" cy="12" r="1.800"/><circle cx="77" cy="13" r="1.800"/><circle cx="11.500" cy="127.500" r="2"/><circle cx="81.500" cy="112.500" r="1.800"/><circle cx="12" cy="197.500" r="1.700"/><circle cx="75.500" cy="201.500" r="1.500"/></g>
 <rect x="85.500" y="82" width="4" height="4" fill="#fff"/><rect x="85.500" y="125" width="4" height="4" fill="#fff"/>
</g>
<g filter="url(#rough2)"><path d="M54.6 67.5L55.2 71.6L55.4 76.1L56.1 81.4L55.2 86.4L56.0 94.6L47.4 89.4L44.8 91.9L42.0 94.7L38.3 93.0L35.2 94.5L32.5 89.9L29.2 92.0L26.2 90.7L21.4 92.4L16.1 92.6L18.6 83.3L17.7 79.2L17.4 75.1L14.6 71.8L15.2 67.5L17.9 63.9L15.1 58.9L18.0 56.0L15.9 49.1L18.1 45.0L23.2 45.8L24.8 40.7L29.6 44.5L32.5 44.5L35.2 40.0L38.5 40.7L41.1 44.1L45.9 40.2L49.1 42.6L54.9 41.8L52.8 50.8L56.0 53.6L54.9 59.1L56.2 63.2z" fill="#1cc0f4"/><path d="M32.4 29.0L43.4 40.0M43.4 29.0L32.4 40.0M39.9 25.3L50.9 36.3M50.9 25.3L39.9 36.3M54.9 12.2L65.9 23.2M65.9 12.2L54.9 23.2M69.9 19.6L80.9 30.6M80.9 19.6L69.9 30.6M36.5 28.5L47.5 39.5M47.5 28.5L36.5 39.5" stroke="#1cc0f4" stroke-width="3" fill="none"/></g></g>
 <g transform="translate(817.5,461.7) scale(1.0020,1)">
<g>
 <rect x="1" y="1" width="101" height="205" fill="#050505"/>
 <rect x="3.500" y="3" width="96" height="201" rx="5" fill="#262626" stroke="#000" stroke-width="1.500"/>
 <rect x="3.500" y="3" width="96" height="201" rx="5" fill="#fff" opacity=".13" filter="url(#nz2)"/>
 <!-- right-side channel shapes -->
 <path d="M76 40h22v18h-12v14h14v66h-16v-50h-10z" fill="#0a0a0a"/>
 <path d="M80 43h16v12h-16z" fill="#3a3a3a"/>
 <path d="M88 75h11v60h-11z" fill="#2c2c2c"/>
 <path d="M78 150h22v50h-14v-28h-8z" fill="#0a0a0a"/>
 <path d="M82 154h16v16h-16z" fill="#363636"/>
 <!-- faint traces -->
 <path d="M20 100h50M20 104h10M30 120h36M62 100v60M34 140h20" stroke="#8a8a8a" stroke-width=".7" stroke-dasharray="1.5 1.5" fill="none"/>
 <rect x="31.500" y="163.500" width="24" height="11.500" fill="none" stroke="#c8c8c8" stroke-width=".9"/>
 <rect x="84.500" y="128.500" width="10" height="22" fill="none" stroke="#9a9a9a" stroke-width=".8"/>
 <g filter="url(#rough2)" fill="#ff0000">
  <path d="M8.500 12h9v96l-3 10h-5l-1.500-12z"/>
  <path d="M8 130h8.500v64l-2 4h-4.500l-2-4z"/>
  <rect x="19" y="4" width="4" height="118"/>
  <rect x="24" y="11" width="30.500" height="85"/>
  <rect x="27" y="3" width="2" height="10"/><rect x="32" y="3" width="2" height="10"/><rect x="38" y="3" width="2" height="10"/><rect x="44" y="3" width="2" height="10"/><rect x="49" y="3" width="2" height="10"/>
  <rect x="55.500" y="3" width="16" height="30"/>
  <rect x="56" y="30" width="14" height="66"/>
  <rect x="57" y="95" width="4" height="30"/>
  <rect x="72" y="16" width="11.500" height="23"/>
  <rect x="88" y="20" width="2.500" height="19"/>
  <path d="M61 62h22v40l-3 10h-16l-3-8z"/>
  <path d="M68 114h12v40h-5v50h-6z"/>
  <rect x="34.500" y="104" width="2.500" height="56"/>
  <rect x="39" y="103" width="7" height="58"/>
  <rect x="47.500" y="104" width="3" height="56"/>
  <rect x="33.500" y="158" width="9" height="9"/><rect x="45" y="158" width="9.500" height="9"/>
  <rect x="22" y="108" width="2.500" height="20"/><rect x="22" y="140" width="2.500" height="14"/><rect x="22" y="176" width="2.500" height="22"/>
  <rect x="24" y="188" width="2.500" height="17"/><rect x="31" y="180" width="2.500" height="16"/><rect x="36.500" y="180" width="2.500" height="18"/><rect x="42" y="180" width="2.500" height="18"/><rect x="47.500" y="180" width="2.500" height="16"/><rect x="52.500" y="178" width="2.500" height="16"/>
  <rect x="61.500" y="174" width="3" height="30"/>
  <rect x="61" y="130" width="2.500" height="10"/><rect x="61" y="144" width="2.500" height="12"/>
  <rect x="86" y="132" width="1.500" height="14"/><rect x="91" y="132" width="1.500" height="14"/>
 </g>
 <g fill="#fff" stroke="#fff">
  <circle cx="11" cy="11.500" r="3.200"/><circle cx="76.500" cy="12.500" r="3.200"/><circle cx="11" cy="126.500" r="3.400"/><circle cx="81" cy="112" r="3.200"/><circle cx="11.500" cy="197" r="3.200"/><circle cx="75" cy="201" r="3"/>
 </g>
 <g fill="#000"><circle cx="11.500" cy="12" r="1.800"/><circle cx="77" cy="13" r="1.800"/><circle cx="11.500" cy="127.500" r="2"/><circle cx="81.500" cy="112.500" r="1.800"/><circle cx="12" cy="197.500" r="1.700"/><circle cx="75.500" cy="201.500" r="1.500"/></g>
 <rect x="85.500" y="82" width="4" height="4" fill="#fff"/><rect x="85.500" y="125" width="4" height="4" fill="#fff"/>
</g>
<g filter="url(#rough2)"><path d="M55.9 67.5L56.0 71.7L54.5 75.5L53.5 79.3L52.3 83.3L55.3 93.1L49.3 92.0L45.8 93.7L41.5 91.4L38.7 93.7L35.5 90.8L32.3 93.9L29.0 93.5L26.0 91.6L21.5 92.4L15.6 93.2L17.8 84.1L16.2 80.2L15.1 76.1L17.5 71.2L15.1 67.5L15.6 63.4L14.9 58.8L17.2 55.4L18.3 51.3L15.1 41.1L20.6 41.1L25.9 43.2L29.9 45.2L32.7 44.6L35.5 42.1L38.4 44.1L42.4 40.2L45.4 42.3L48.4 44.6L55.3 41.9L53.9 50.2L56.5 53.7L56.4 58.7L54.6 63.6z" fill="#1cc0f4"/><path d="M34.2 11.4L45.2 22.4M45.2 11.4L34.2 22.4M59.3 11.4L70.3 22.4M70.3 11.4L59.3 22.4" stroke="#1cc0f4" stroke-width="3" fill="none"/></g></g>
 <g fill="none" stroke="#a0e0e6" stroke-width="1" opacity=".9"><rect x="614.600" y="254" width="102.400" height="206.5"/><rect x="717.800" y="254" width="99.500" height="206.5"/><rect x="818.300" y="254" width="101.400" height="206.5"/><rect x="614.600" y="461.7" width="102.400" height="206.5"/><rect x="717.800" y="461.7" width="99.500" height="206.5"/><rect x="818.300" y="461.7" width="101.400" height="206.5"/></g>
 <rect x="916" y="415" width="8.500" height="18" fill="#d8d8d8"/><path d="M918.500 418v12M921.500 419v10" stroke="#555" stroke-width="1"/><circle cx="910.500" cy="633" r="4" fill="#3a3a3a" stroke="#666" stroke-width=".8"/> <rect x="686" y="243" width="1.300" height="435" fill="#f4e400"/><rect x="610" y="624.200" width="322" height="1.200" fill="#f4e400"/>
 </g>
</svg>

<!-- 42_rear2.html -->
<div class="a" style="left:941px;top:245px;width:96px;height:39px;border:1px solid #d0d0d0;background:#f0f0f0"></div><svg style="left:941px;top:245px" width="96" height="39" viewBox="941 245 96 39"><rect x="948.5" y="251.500" width="10" height="11" rx="2" fill="#d82020" stroke="#333" stroke-width=".5"/><text x="953.5" y="260" font-size="7" font-weight="bold" fill="#fff" text-anchor="middle" font-family="Liberation Sans, sans-serif">H</text><rect x="959.8" y="251.500" width="10" height="11" rx="2" fill="#d82020" stroke="#333" stroke-width=".5"/><text x="964.8" y="260" font-size="7" font-weight="bold" fill="#fff" text-anchor="middle" font-family="Liberation Sans, sans-serif">A</text><rect x="972.2" y="251.500" width="10" height="11" rx="2" fill="#d82020" stroke="#333" stroke-width=".5"/><text x="977.2" y="260" font-size="7" font-weight="bold" fill="#fff" text-anchor="middle" font-family="Liberation Sans, sans-serif">V</text><rect x="984.1" y="251.500" width="10" height="11" rx="2" fill="#e89a18" stroke="#333" stroke-width=".5"/><text x="989.1" y="260" font-size="7" font-weight="bold" fill="#fff" text-anchor="middle" font-family="Liberation Sans, sans-serif">O</text><rect x="996.1" y="251.500" width="10" height="11" rx="2" fill="#e8d020" stroke="#333" stroke-width=".5"/><text x="1001.1" y="260" font-size="7" font-weight="bold" fill="#fff" text-anchor="middle" font-family="Liberation Sans, sans-serif">B</text><rect x="1008.5" y="251.500" width="10" height="11" rx="2" fill="#9a28c8" stroke="#333" stroke-width=".5"/><text x="1013.5" y="260" font-size="7" font-weight="bold" fill="#fff" text-anchor="middle" font-family="Liberation Sans, sans-serif">S</text><rect x="1020.5" y="251.500" width="10" height="11" rx="2" fill="#2058d8" stroke="#333" stroke-width=".5"/><text x="1025.5" y="260" font-size="7" font-weight="bold" fill="#fff" text-anchor="middle" font-family="Liberation Sans, sans-serif">H</text><rect x="948.5" y="267.500" width="10" height="11" rx="2" fill="#2058d8" stroke="#333" stroke-width=".5"/><text x="953.5" y="276" font-size="7" font-weight="bold" fill="#fff" text-anchor="middle" font-family="Liberation Sans, sans-serif">A</text><rect x="959.8" y="267.500" width="10" height="11" rx="2" fill="#2058d8" stroke="#333" stroke-width=".5"/><text x="964.8" y="276" font-size="7" font-weight="bold" fill="#fff" text-anchor="middle" font-family="Liberation Sans, sans-serif">V</text><rect x="972.2" y="267.500" width="10" height="11" rx="2" fill="#b4b4b4" stroke="#333" stroke-width=".5"/><text x="977.2" y="276" font-size="7" font-weight="bold" fill="#fff" text-anchor="middle" font-family="Liberation Sans, sans-serif">B</text><rect x="984.1" y="267.500" width="10" height="11" rx="2" fill="#d82020" stroke="#333" stroke-width=".5"/><text x="989.1" y="276" font-size="7" font-weight="bold" fill="#fff" text-anchor="middle" font-family="Liberation Sans, sans-serif">N</text></svg><div class="a" style="left:941px;top:289px;width:96px;height:21px;border:1px solid #dcdcdc;background:#fdfdfd"></div><div class="t" style="left:944px;top:294px;font-size:12px;letter-spacing:-.5px">测定值</div><svg style="left:1027px;top:297px" width="8" height="6"><path d="M1 1h6l-3 4z" fill="#111"/></svg><svg style="left:940px;top:318px" width="14" height="130" viewBox="940 318 14 130"><defs><radialGradient id="grad" cx=".4" cy=".35" r=".7"><stop offset="0" stop-color="#ffffff"/><stop offset="1" stop-color="#d0d0d0"/></radialGradient></defs><circle cx="947.200" cy="327.5" r="5.300" fill="url(#grad)" stroke="#8a8a8a" stroke-width="1"/><circle cx="947.200" cy="346.3" r="5.300" fill="url(#grad)" stroke="#8a8a8a" stroke-width="1"/><circle cx="947.200" cy="346.3" r="2.800" fill="#1c4a9c"/><circle cx="946.400" cy="345.5" r="1" fill="#6aa0e8"/><circle cx="947.200" cy="364.5" r="5.300" fill="url(#grad)" stroke="#8a8a8a" stroke-width="1"/><circle cx="947.200" cy="383" r="5.300" fill="url(#grad)" stroke="#8a8a8a" stroke-width="1"/><circle cx="947.200" cy="402" r="5.300" fill="url(#grad)" stroke="#8a8a8a" stroke-width="1"/><circle cx="947.200" cy="420.5" r="5.300" fill="url(#grad)" stroke="#8a8a8a" stroke-width="1"/><circle cx="947.200" cy="439.5" r="5.300" fill="url(#grad)" stroke="#8a8a8a" stroke-width="1"/></svg><div class="t" style="left:957px;top:321.0px;font-size:12px;letter-spacing:-.6px">高度(%)</div><div class="t" style="left:957px;top:339.8px;font-size:12px;letter-spacing:-.6px">高度(um)</div><div class="t" style="left:957px;top:358.0px;font-size:12px;letter-spacing:-.6px">面积</div><div class="t" style="left:957px;top:376.5px;font-size:12px;letter-spacing:-.6px">体积</div><div class="t" style="left:957px;top:395.5px;font-size:12px;letter-spacing:-.6px">X方向偏移</div><div class="t" style="left:957px;top:414.0px;font-size:12px;letter-spacing:-.6px">Y方向偏移</div><div class="t" style="left:957px;top:433.0px;font-size:12px;letter-spacing:-.6px">板弯</div><div class="a" style="left:947px;top:524px;width:27px;height:151px;background:linear-gradient(to bottom,#e00000 0%,#ff3000 6%,#ff9000 18%,#ffe000 30%,#c8f000 38%,#30e000 50%,#00e060 58%,#00e0e0 68%,#0090ff 76%,#0020e0 84%,#000080 92%,#000010 100%);border:1px solid #777"></div><div class="t" style="left:980px;top:519.5px;font-size:10px;letter-spacing:-.4px">250</div><div class="t" style="left:980px;top:534.5px;font-size:10px;letter-spacing:-.4px">225</div><div class="t" style="left:980px;top:549.5px;font-size:10px;letter-spacing:-.4px">200</div><div class="t" style="left:980px;top:564.5px;font-size:10px;letter-spacing:-.4px">175</div><div class="t" style="left:980px;top:579.5px;font-size:10px;letter-spacing:-.4px">150</div><div class="t" style="left:980px;top:594.5px;font-size:10px;letter-spacing:-.4px">125</div><div class="t" style="left:980px;top:609.5px;font-size:10px;letter-spacing:-.4px">100</div><div class="t" style="left:980px;top:624.5px;font-size:10px;letter-spacing:-.4px">75</div><div class="t" style="left:980px;top:639.5px;font-size:10px;letter-spacing:-.4px">50</div><div class="t" style="left:980px;top:654.5px;font-size:10px;letter-spacing:-.4px">25</div><div class="t" style="left:980px;top:669.5px;font-size:10px;letter-spacing:-.4px">0</div><div class="t" style="left:1015px;top:519px;font-size:10px">[um]</div><div class="a" style="left:1016px;top:654px;width:22px;height:24px;border:1px solid #b8b8b8;background:#f4f4f4"></div><svg style="left:1016px;top:654px" width="22" height="24" viewBox="0 0 22 24"><path d="M6 4v7M8.500 4v7M5 11h5v3h-1.500v6h-2v-6H5z" fill="#c8c8c8" stroke="#777" stroke-width=".8"/><rect x="12" y="9" width="5" height="10" fill="#f0a020" stroke="#a06010" stroke-width=".6"/><path d="M13 4h3l1 5h-5z" fill="#b8b8b8" stroke="#666" stroke-width=".6"/></svg>
<!-- 50_side.html -->
<div class="a" style="left:1045px;top:200px;width:87px;height:798px;background:#f0f0f0"></div><div class="ptitle" style="left:1049px;top:201px;width:84px;height:21px;line-height:20px;font-size:13px;letter-spacing:-.5px">测试结果</div><div class="a" style="left:1076px;top:224px;width:57px;height:28px;background:#fff"></div><div class="a" style="left:1051px;top:226px;width:23px;height:27px;border:1px solid #c4c4c4;background:#f2f2f2"></div><div class="a" style="left:1051px;top:257px;width:23px;height:27px;border:1px solid #7ab8f0;background:#cfe6fb"></div><div class="a" style="left:1051px;top:290px;width:23px;height:27px;border:1px solid #c4c4c4;background:#f2f2f2"></div><svg style="left:1051px;top:226px" width="23" height="92" viewBox="1051 226 23 92"><rect x="1055.500" y="231.500" width="14" height="15" fill="#fff" stroke="#3a5a9a"/><rect x="1056" y="232" width="13" height="3" fill="#4a6ab0"/><rect x="1056" y="243" width="13" height="3" fill="#8aa0d0"/><text x="1062.500" y="242" font-size="6" font-weight="bold" text-anchor="middle" font-family="Liberation Sans, sans-serif">TAB</text><rect x="1055.500" y="263.500" width="14" height="15" fill="#fff" stroke="#444"/><path d="M1062.500 264v14" stroke="#444"/><text x="1059" y="274" font-size="7" font-weight="bold" text-anchor="middle" font-family="Liberation Sans, sans-serif">1</text><text x="1066" y="274" font-size="7" font-weight="bold" text-anchor="middle" font-family="Liberation Sans, sans-serif">2</text><rect x="1056.500" y="295.500" width="12" height="16" fill="#fff" stroke="#444"/><path d="M1057 303.500h11" stroke="#444"/><text x="1062.500" y="302" font-size="7" font-weight="bold" text-anchor="middle" font-family="Liberation Sans, sans-serif">2</text><text x="1062.500" y="310.500" font-size="7" font-weight="bold" text-anchor="middle" font-family="Liberation Sans, sans-serif">1</text><defs><radialGradient id="grad2" cx=".4" cy=".35" r=".7"><stop offset="0" stop-color="#fff"/><stop offset="1" stop-color="#c8c8c8"/></radialGradient></defs></svg><svg style="left:1077px;top:234px" width="13" height="13" viewBox="0 0 13 13"><circle cx="6.300" cy="6.300" r="5.300" fill="#e8e8e8" stroke="#8a8a8a"/><circle cx="6.300" cy="6.300" r="3.200" fill="#1c5ab8"/><circle cx="5.300" cy="5.300" r="1.200" fill="#7ab0f0"/></svg><div class="t" style="left:1094px;top:235px;font-size:12.500px;letter-spacing:-.5px">基板</div><div class="a" style="left:1076px;top:256px;width:60px;height:173px;border:1px solid #cfcfcf"></div><div class="t" style="left:1100px;top:266px;font-size:11.500px;font-weight:bold;text-decoration:underline;letter-spacing:-.4px">LANE1</div><div class="a" style="left:1081px;top:286px;width:56px;height:30px;border:2px solid #dadada;border-right:none;background:#f1f1f1"></div><div class="t" style="left:1090px;top:294.25px;font-size:12.5px;font-weight:bold;color:#111;letter-spacing:-.3px">检查数量</div><div class="a" style="left:1081px;top:319px;width:56px;height:18px;border:2px solid #dadada;border-right:none;background:#f1f1f1"></div><div class="t" style="left:1086px;top:321.5px;font-size:12px;font-weight:bold;color:#0000e0;letter-spacing:-.3px">良品+PASS</div><div class="a" style="left:1081px;top:341px;width:56px;height:19px;border:2px solid #dadada;border-right:none;background:#f1f1f1"></div><div class="t" style="left:1102px;top:343.75px;font-size:12.5px;font-weight:bold;color:#0a7a0a;letter-spacing:-.3px">良品</div><div class="a" style="left:1081px;top:364px;width:56px;height:18px;border:2px solid #dadada;border-right:none;background:#f1f1f1"></div><div class="t" style="left:1102px;top:366.75px;font-size:11.5px;font-weight:bold;color:#ff8010;letter-spacing:-.3px">PASS</div><div class="a" style="left:1081px;top:386px;width:56px;height:20px;border:2px solid #dadada;border-right:none;background:#f1f1f1"></div><div class="t" style="left:1102px;top:389.25px;font-size:12.5px;font-weight:bold;color:#f00000;letter-spacing:-.3px">不良</div><div class="a" style="left:1075px;top:436px;width:58px;height:21px;border:1px solid #c0c0c0;background:#f8f8f8"></div><div class="a" style="left:1051px;top:436px;width:52px;height:22px;border:1px solid #9a9a9a;border-top:none;background:#fff"></div><div class="t" style="left:1054px;top:441px;font-size:12px;letter-spacing:-.8px">测试结果</div><div class="t" style="left:1105px;top:441px;font-size:12px;color:#a8a8a8;letter-spacing:-.8px">不良榜</div><div class="ptitle" style="left:1049px;top:466px;width:84px;height:20px;line-height:19px;font-size:13px;letter-spacing:-.8px">焊盘偏移曲线图</div><div class="a" style="left:1076px;top:488px;width:57px;height:236px;background:#fff;border:1px solid #c8c8c8;border-right:none"></div><div class="a" style="left:1049px;top:489px;width:23px;height:26px;border:1px solid #b8b8b8;background:#ececec"></div><div class="a" style="left:1049px;top:515px;width:23px;height:26px;border:1px solid #b8b8b8;background:#ececec"></div><svg style="left:1049px;top:489px" width="23" height="52" viewBox="0 0 23 52"><g><path d="M13 15l6 7" stroke="#e08a30" stroke-width="3" stroke-linecap="round"/><circle cx="10" cy="11" r="5.500" fill="#bfe0c8" stroke="#7a94b0" stroke-width="1.300"/><path d="M7.500 11h5M10 8.500v5" stroke="#28a828" stroke-width="1.800"/></g><g transform="translate(0,26)"><path d="M13 15l6 7" stroke="#e08a30" stroke-width="3" stroke-linecap="round"/><circle cx="10" cy="11" r="5.500" fill="#cfe0ec" stroke="#7a94b0" stroke-width="1.300"/><path d="M7.500 11h5" stroke="#e04020" stroke-width="1.800"/></g></svg><div class="t" style="left:1078px;top:494px;font-size:12px;letter-spacing:-.8px">X平均偏移:</div><div class="t" style="left:1078px;top:513px;font-size:12px;letter-spacing:-.8px">Y平均偏移:</div><div class="a" style="left:1097px;top:530px;width:0;height:172px;border-left:1px dashed #d8d8d8"></div><div class="a" style="left:1086px;top:597px;width:47px;height:1px;background:#222"></div><div class="t" style="left:1078px;top:603px;font-size:11px;letter-spacing:-.3px">-20.0</div><div class="t" style="left:1078px;top:662px;font-size:12px;letter-spacing:-.8px">X-轴: X偏移</div><div class="t" style="left:1078px;top:685px;font-size:12px;letter-spacing:-.8px">Y-轴: Y偏移</div><div class="a" style="left:1077px;top:706px;width:56px;height:18px;background:#f4f4f4;border-bottom:2px solid #b0b0b0"></div><div class="t" style="left:1083px;top:709px;font-size:12.500px;letter-spacing:-.3px"><b>Lane</b> 1</div><svg style="left:1122px;top:706px" width="10" height="18"><path d="M2 17L7 1" stroke="#777" fill="none"/></svg><div class="a" style="left:1076px;top:726px;width:57px;height:18px;background:#f0f0f0;border:1px solid #dcdcdc"></div><svg style="left:1081px;top:731px" width="6" height="8"><path d="M5 0v8L1 4z" fill="#555"/></svg><div class="ptitle" style="left:1049px;top:752px;width:84px;height:21px;line-height:20px;font-size:13px;letter-spacing:-.6px">3D形状</div><div class="a" style="left:1076px;top:776px;width:57px;height:180px;background:linear-gradient(#d6e6f6,#e2e4fa)"></div><div class="a" style="left:1051px;top:776px;width:23px;height:27px;border:1px solid #7ab8f0;background:#cfe6fb"></div><div class="a" style="left:1051px;top:806px;width:23px;height:27px;border:1px solid #b8b8b8;background:#f2f2f2"></div><div class="a" style="left:1051px;top:840px;width:23px;height:27px;border:1px solid #b8b8b8;background:#f2f2f2"></div><div class="a" style="left:1051px;top:869px;width:23px;height:27px;border:1px solid #b8b8b8;background:#f2f2f2"></div><div class="a" style="left:1051px;top:899px;width:23px;height:27px;border:1px solid #b8b8b8;background:#f2f2f2"></div><div class="a" style="left:1051px;top:836px;width:23px;height:1px;background:#b0b0b0"></div><svg style="left:1051px;top:776px" width="23" height="150" viewBox="1051 776 23 150"><path d="M1057 784h9l3 3v9l-3 2h-9l-2-2v-9z" fill="#f4dc40" stroke="#222" stroke-width="1.200"/><circle cx="1063.500" cy="791" r="3.500" fill="#cfe4f8" stroke="#223" stroke-width="1.200"/><path d="M1066 794l3 3" stroke="#223" stroke-width="1.600"/><path d="M1056 821q2-4 4-1q2-4 4-1q2-3 4 0q2 0 2 2z" fill="#f8b0b0" stroke="#e02020" stroke-width="1"/><path d="M1056 848h14M1061 845v16" stroke="#e01818" stroke-width="1"/><path d="M1062 849v9l2-2 2 4 1.500-.8-2-4h3z" fill="#fff" stroke="#111" stroke-width=".8"/><rect x="1056.500" y="876.500" width="12" height="13" rx="2" fill="#8ea2e6" stroke="#4e5fae"/><rect x="1058" y="878" width="9" height="4" fill="#e8eefc"/><rect x="1057" y="884" width="11" height="5" fill="#6a80d8"/><text x="1062.500" y="918" font-size="17" font-weight="bold" text-anchor="middle" font-family="Liberation Serif, serif">T</text></svg><div class="a" style="left:1077px;top:955px;width:56px;height:19px;background:#f8f8f8;border-bottom:2px solid #b0b0b0"></div><div class="t" style="left:1083px;top:958px;font-size:12.500px;letter-spacing:-.3px"><b>Lane</b> 1</div><svg style="left:1122px;top:956px" width="10" height="18"><path d="M2 17L7 1" stroke="#777" fill="none"/></svg><div class="a" style="left:1076px;top:976px;width:57px;height:22px;background:#f0f0f0;border:1px solid #dcdcdc"></div><svg style="left:1081px;top:982px" width="6" height="8"><path d="M5 0v8L1 4z" fill="#555"/></svg><div class="a" style="left:1125px;top:76px;width:6px;height:922px;background:linear-gradient(to right,rgba(0,0,0,0),rgba(0,0,0,.1) 50%,rgba(0,0,0,.38))"></div>
<!-- 60_dlg.html -->
<div class="a" style="left:1131px;top:74px;width:310px;height:924px;background:#f0f0f0;border-left:1px solid #5a5a5a;border-top:1px solid #7a7a7a"></div><div class="a" style="left:1132px;top:75px;width:309px;height:27px;background:linear-gradient(#f6f6f6,#e4e4e4)"></div><div class="a" style="left:1132px;top:102px;width:5px;height:896px;background:linear-gradient(to right,#e4e4e4,#fafafa)"></div><div class="t" id="dtitle" style="left:1138px;top:83px;font-size:12px;letter-spacing:-.62px">Panel Teaching:216061-3-V9-0B-B-01</div><div class="a" style="left:1430px;top:80px;width:12px;height:18px;border:1px solid #8a8a8a;background:#dcdcdc;font-size:9px;line-height:16px;padding-left:2px">x</div><div class="a" style="left:1398px;top:75px;width:22px;height:20px;border-radius:50%;background:radial-gradient(#8fcf8f,rgba(200,230,200,0) 70%)"></div><div class="a" style="left:1137px;top:102px;width:304px;height:2px;background:#8a8a8a"></div><div class="a" style="left:1137px;top:104px;width:304px;height:894px;background:#f0f0f0;border-left:1px solid #a8a8a8"></div><svg style="left:1138px;top:104px" width="303" height="22" viewBox="1138 104 303 22"><path d="M1138 124H1441" stroke="#8a8a8a"/><path d="M1141 106l4 18" stroke="#777" fill="none"/><path d="M1145 124V108h65l6 16" stroke="#777" fill="#f6f6f6"/><path d="M1216 124V108h68l7 16" stroke="#777" fill="#f6f6f6"/><path d="M1294 124V108h48l6 16" stroke="#777" fill="#f6f6f6"/><path d="M1351 125V106h51l8 19" stroke="#777" fill="#f0f0f0"/><path d="M1351.500 125h57" stroke="#f0f0f0" stroke-width="2"/><path d="M1419 111v7l-4-3.500z" fill="#111"/><path d="M1431 111v7l4-3.500z" fill="none" stroke="#888"/></svg><div class="t" style="left:1151px;top:109px;font-size:12px;letter-spacing:-.6px">fid扫描方式</div><div class="t" style="left:1222px;top:109px;font-size:12px;letter-spacing:-1.5px">PCB参考图像</div><div class="t" style="left:1300px;top:109px;font-size:12px;letter-spacing:-.85px">Badmark</div><div class="t" style="left:1358px;top:109px;font-size:12px;font-weight:bold;letter-spacing:-.6px">Barcode</div><div class="ghead" style="left:1141px;top:127px;width:297px;height:19px">Barcode Groups</div><div class="a" style="left:1141px;top:146px;width:297px;height:134px;background:#fff"></div><div class="a" style="left:1141px;top:148px;width:297px;height:23px;background:linear-gradient(#fdfdfd,#eeeeee);border-bottom:1px solid #d8c8b0"></div><div class="t c" style="left:1141px;top:154px;width:31px;font-size:12px;letter-spacing:-.45px">Use</div><div class="a" style="left:1171px;top:149px;width:1px;height:21px;background:#dcdcdc"></div><div class="t c" style="left:1172px;top:154px;width:50.5px;font-size:12px;letter-spacing:-.45px">Scope</div><div class="a" style="left:1221.5px;top:149px;width:1px;height:21px;background:#dcdcdc"></div><div class="t c" style="left:1222.5px;top:154px;width:36.0px;font-size:12px;letter-spacing:-.45px">Type</div><div class="a" style="left:1257.5px;top:149px;width:1px;height:21px;background:#dcdcdc"></div><div class="t c" style="left:1258.5px;top:154px;width:73.5px;font-size:12px;letter-spacing:-.45px">SubType</div><div class="a" style="left:1331px;top:149px;width:1px;height:21px;background:#dcdcdc"></div><div class="t c" style="left:1332px;top:154px;width:45px;font-size:12px;letter-spacing:-.45px">Length</div><div class="a" style="left:1376px;top:149px;width:1px;height:21px;background:#dcdcdc"></div><div class="t c" style="left:1377px;top:154px;width:60px;font-size:12px;letter-spacing:-.45px">Register</div><div class="a" style="left:1436px;top:149px;width:1px;height:21px;background:#dcdcdc"></div><div class="a" style="left:1141px;top:171px;width:297px;height:24px;background:#3399ff"></div><div class="a" style="left:1171px;top:171px;width:1px;height:48px;background:#e4e4e4;opacity:.6"></div><div class="a" style="left:1221.5px;top:171px;width:1px;height:48px;background:#e4e4e4;opacity:.6"></div><div class="a" style="left:1257.5px;top:171px;width:1px;height:48px;background:#e4e4e4;opacity:.6"></div><div class="a" style="left:1331px;top:171px;width:1px;height:48px;background:#e4e4e4;opacity:.6"></div><div class="a" style="left:1376px;top:171px;width:1px;height:48px;background:#e4e4e4;opacity:.6"></div><div class="a" style="left:1141px;top:219px;width:297px;height:1px;background:#ececec"></div><div class="a" style="left:1152px;top:177px;width:12px;height:12px;border:1px solid #8e8f8f;background:linear-gradient(135deg,#d8d8d8,#fff)"></div><svg style="left:1153px;top:178px" width="10" height="10"><path d="M2 4.500l2.500 3 3.500-6" stroke="#2a3a8a" stroke-width="1.700" fill="none"/></svg><div class="a" style="left:1152px;top:201px;width:12px;height:12px;border:1px solid #8e8f8f;background:linear-gradient(135deg,#d8d8d8,#fff)"></div><div class="t" style="left:1175px;top:177px;font-size:12px;letter-spacing:-.45px;color:#fff">Global</div><div class="t" style="left:1225px;top:177px;font-size:12px;letter-spacing:-.45px;color:#fff">2D</div><div class="t" style="left:1261px;top:177px;font-size:12px;letter-spacing:-.45px;color:#fff">Maxtrix Co</div><div class="t" style="left:1335px;top:177px;font-size:12px;letter-spacing:-.45px;color:#fff">0</div><div class="t" style="left:1380px;top:177px;font-size:12px;letter-spacing:-.45px;color:#fff">Yes</div><div class="t" style="left:1175px;top:202px;font-size:12px;letter-spacing:-.45px;color:#000">Group01</div><div class="t" style="left:1225px;top:202px;font-size:12px;letter-spacing:-.45px;color:#000">1D</div><div class="t" style="left:1261px;top:202px;font-size:12px;letter-spacing:-.45px;color:#000">Don't Care</div><div class="t" style="left:1335px;top:202px;font-size:12px;letter-spacing:-.45px;color:#000">0</div><div class="t" style="left:1380px;top:202px;font-size:12px;letter-spacing:-.45px;color:#000">No</div><div class="a" style="left:1242px;top:172px;width:15px;height:23px;border:1px solid #9a9a9a;background:linear-gradient(#f8f8f8,#d8d8d8)"></div><svg style="left:1246px;top:182px" width="8" height="5"><path d="M0 0h7l-3.500 4z" fill="#111"/></svg><div class="a" style="left:1315px;top:172px;width:15px;height:23px;border:1px solid #9a9a9a;background:linear-gradient(#f8f8f8,#d8d8d8)"></div><svg style="left:1319px;top:182px" width="8" height="5"><path d="M0 0h7l-3.500 4z" fill="#111"/></svg><div class="a" style="left:1242px;top:196px;width:15px;height:23px;border:1px solid #9a9a9a;background:linear-gradient(#f8f8f8,#d8d8d8)"></div><svg style="left:1246px;top:206px" width="8" height="5"><path d="M0 0h7l-3.500 4z" fill="#111"/></svg><div class="a" style="left:1315px;top:196px;width:15px;height:23px;border:1px solid #9a9a9a;background:linear-gradient(#f8f8f8,#d8d8d8)"></div><svg style="left:1319px;top:206px" width="8" height="5"><path d="M0 0h7l-3.500 4z" fill="#111"/></svg><div class="a" style="left:1141px;top:280px;width:300px;height:1px;background:#fff"></div><div class="ghead" style="left:1141px;top:284px;width:297px;height:19px">Barcode Focusing</div><div class="a" style="left:1151px;top:313px;width:13px;height:13px;border:1px solid #8e8f8f;background:linear-gradient(135deg,#d8d8d8,#fff)"></div><svg style="left:1152px;top:314px" width="11" height="11"><path d="M2.500 5l2.500 3.500 3.500-7" stroke="#2a3a8a" stroke-width="1.700" fill="none"/></svg><div class="t" style="left:1168px;top:315px;font-size:12px;letter-spacing:-.45px">Barcode Auto focus</div><div class="a" style="left:1139px;top:334px;width:302px;height:1px;background:#fff"></div><div class="ghead" style="left:1141px;top:339px;width:297px;height:19px">Postion</div><div class="t" style="left:1157px;top:367px;font-size:12px;letter-spacing:0">Left / Top</div><div class="btn" style="left:1169px;top:381px;width:35px;height:24px;line-height:22px">Set</div><div class="a" style="left:1165px;top:377px;width:43px;height:31px;border:4px solid #ff0000"></div><div class="a" style="left:1209px;top:398px;width:32px;height:29px;background:#fdfdfd;border:1px solid #e4e4e4"></div><svg style="left:1212px;top:402px" width="28" height="22" viewBox="0 0 28 22"><path d="M1.500 0v21M4.500 0v21M9 0v21M13.500 0v21M16 0v21M20 0v21M23 0v21M26 0v21" stroke="#111" stroke-width="1.500"/><path d="M9 0v21M20 0v21" stroke="#111" stroke-width="2.500"/></svg><div class="btn" style="left:1247px;top:417px;width:42px;height:23px;line-height:21px">Set</div><div class="t" style="left:1235px;top:446px;font-size:12px;letter-spacing:-.45px">Right / Bottom</div><div class="t" style="left:1336px;top:366px;font-size:12px;letter-spacing:-.45px">Margin :</div><div class="ibox" style="left:1343px;top:386px;width:58px;height:22px;font-size:12px;line-height:22px;padding-right:6px">10</div><div class="t" style="left:1410px;top:392px;font-size:12px;letter-spacing:-.45px">mm</div><div class="btn" style="left:1343px;top:436px;width:95px;height:26px;line-height:24px;padding-left:0;letter-spacing:-.6px">Apply Position</div><div class="a" style="left:1331px;top:427px;width:103px;height:35px;border:4px solid #ff0000"></div><div class="ghead" style="left:1141px;top:472px;width:300px;height:18px;line-height:18px">Led Setting</div><div class="t" style="left:1169.5px;top:496px;transform:translateX(-50%);font-size:12px;letter-spacing:-1.3px;color:#f02020">RED</div><div class="t" style="left:1211px;top:496px;transform:translateX(-50%);font-size:12px;letter-spacing:-1.3px;color:#20e020">GREEN</div><div class="t" style="left:1253px;top:496px;transform:translateX(-50%);font-size:12px;letter-spacing:-1px;color:#2020e0">BLUE</div><div class="t" style="left:1294.5px;top:496px;transform:translateX(-50%);font-size:12px;letter-spacing:-0.5px;color:#111">WHITE</div><div class="t" style="left:1337px;top:496px;transform:translateX(-50%);font-size:12px;letter-spacing:-0.8px;color:#111">EXTRA</div><div class="t" style="left:1401px;top:496px;transform:translateX(-50%);font-size:12px;letter-spacing:-0.4px;color:#111">Order</div><div class="a" style="left:1141px;top:511px;width:300px;height:1px;background:#c8c8c8"></div><div class="a" style="left:1141px;top:512px;width:300px;height:1px;background:#fff"></div><div class="a" style="left:1366px;top:491px;width:1px;height:155px;background:#c8c8c8"></div><div class="a" style="left:1367px;top:491px;width:1px;height:155px;background:#fff"></div><div class="ibox" style="left:1151.5px;top:517px;width:37px;height:22px;background:#fff;border-color:#e6e6e6;color:#f01010;font-weight:bold;font-size:14px;line-height:21px;padding-right:3px;letter-spacing:-.5px">30</div><div class="ibox" style="left:1193px;top:517px;width:37px;height:22px;background:#fff;border-color:#e6e6e6;color:#10e010;font-weight:bold;font-size:14px;line-height:21px;padding-right:3px;letter-spacing:-.5px">0</div><div class="ibox" style="left:1235px;top:517px;width:37px;height:22px;background:#fff;border-color:#e6e6e6;color:#1010e0;font-weight:bold;font-size:14px;line-height:21px;padding-right:3px;letter-spacing:-.5px">0</div><div class="ibox" style="left:1276px;top:517px;width:37px;height:22px;background:#fff;border-color:#e6e6e6;color:#555;font-weight:normal;font-size:14px;line-height:21px;padding-right:3px;letter-spacing:-.5px">0</div><div class="ibox" style="left:1318px;top:517px;width:37px;height:22px;background:#fff;border-color:#e6e6e6;color:#555;font-weight:normal;font-size:14px;line-height:21px;padding-right:3px;letter-spacing:-.5px">0</div><div class="a" style="left:1375px;top:517px;width:54px;height:22px;border:1px solid #e4e4e4;background:#fbfbfb"></div><div class="t" style="left:1378px;top:522px;font-size:12px;letter-spacing:-.8px">1</div><svg style="left:1418px;top:525px" width="7" height="5"><path d="M0 0h6l-3 3.500z" fill="#111"/></svg><div class="ibox" style="left:1151.5px;top:543px;width:37px;height:22px;background:#808080;border-color:#8a8a8a;color:#f01010;font-weight:bold;font-size:14px;line-height:21px;padding-right:3px;letter-spacing:-.5px">0</div><div class="ibox" style="left:1193px;top:543px;width:37px;height:22px;background:#808080;border-color:#8a8a8a;color:#10e010;font-weight:bold;font-size:14px;line-height:21px;padding-right:3px;letter-spacing:-.5px">50</div><div class="ibox" style="left:1235px;top:543px;width:37px;height:22px;background:#808080;border-color:#8a8a8a;color:#1010e0;font-weight:bold;font-size:14px;line-height:21px;padding-right:3px;letter-spacing:-.5px">0</div><div class="ibox" style="left:1276px;top:543px;width:37px;height:22px;background:#808080;border-color:#8a8a8a;color:#6c6c6c;font-weight:normal;font-size:14px;line-height:21px;padding-right:3px;letter-spacing:-.5px">0</div><div class="ibox" style="left:1318px;top:543px;width:37px;height:22px;background:#808080;border-color:#8a8a8a;color:#6c6c6c;font-weight:normal;font-size:14px;line-height:21px;padding-right:3px;letter-spacing:-.5px">0</div><div class="a" style="left:1375px;top:543px;width:54px;height:22px;border:1px solid #e4e4e4;background:#fbfbfb"></div><div class="t" style="left:1378px;top:548px;font-size:12px;letter-spacing:-.8px">NoUse</div><svg style="left:1418px;top:551px" width="7" height="5"><path d="M0 0h6l-3 3.500z" fill="#111"/></svg><div class="ibox" style="left:1151.5px;top:568.5px;width:37px;height:22px;background:#fff;border-color:#e6e6e6;color:#f01010;font-weight:bold;font-size:14px;line-height:21px;padding-right:3px;letter-spacing:-.5px">0</div><div class="ibox" style="left:1193px;top:568.5px;width:37px;height:22px;background:#fff;border-color:#e6e6e6;color:#10e010;font-weight:bold;font-size:14px;line-height:21px;padding-right:3px;letter-spacing:-.5px">0</div><div class="ibox" style="left:1235px;top:568.5px;width:37px;height:22px;background:#fff;border-color:#e6e6e6;color:#1010e0;font-weight:bold;font-size:14px;line-height:21px;padding-right:3px;letter-spacing:-.5px">250</div><div class="ibox" style="left:1276px;top:568.5px;width:37px;height:22px;background:#fff;border-color:#e6e6e6;color:#555;font-weight:normal;font-size:14px;line-height:21px;padding-right:3px;letter-spacing:-.5px">0</div><div class="ibox" style="left:1318px;top:568.5px;width:37px;height:22px;background:#fff;border-color:#e6e6e6;color:#555;font-weight:normal;font-size:14px;line-height:21px;padding-right:3px;letter-spacing:-.5px">0</div><div class="a" style="left:1375px;top:568.5px;width:54px;height:22px;border:1px solid #e4e4e4;background:#fbfbfb"></div><div class="t" style="left:1378px;top:573.5px;font-size:12px;letter-spacing:-.8px">NoUse</div><svg style="left:1418px;top:576.5px" width="7" height="5"><path d="M0 0h6l-3 3.500z" fill="#111"/></svg><div class="ibox" style="left:1151.5px;top:594px;width:37px;height:22px;background:#fff;border-color:#e6e6e6;color:#f01010;font-weight:bold;font-size:14px;line-height:21px;padding-right:3px;letter-spacing:-.5px">0</div><div class="ibox" style="left:1193px;top:594px;width:37px;height:22px;background:#fff;border-color:#e6e6e6;color:#10e010;font-weight:bold;font-size:14px;line-height:21px;padding-right:3px;letter-spacing:-.5px">0</div><div class="ibox" style="left:1235px;top:594px;width:37px;height:22px;background:#fff;border-color:#e6e6e6;color:#1010e0;font-weight:bold;font-size:14px;line-height:21px;padding-right:3px;letter-spacing:-.5px">0</div><div class="ibox" style="left:1276px;top:594px;width:37px;height:22px;background:#fff;border-color:#e6e6e6;color:#555;font-weight:normal;font-size:14px;line-height:21px;padding-right:3px;letter-spacing:-.5px">250</div><div class="ibox" style="left:1318px;top:594px;width:37px;height:22px;background:#fff;border-color:#e6e6e6;color:#555;font-weight:normal;font-size:14px;line-height:21px;padding-right:3px;letter-spacing:-.5px">0</div><div class="a" style="left:1375px;top:594px;width:54px;height:22px;border:1px solid #e4e4e4;background:#fbfbfb"></div><div class="t" style="left:1378px;top:599px;font-size:12px;letter-spacing:-.8px">NoUse</div><svg style="left:1418px;top:602px" width="7" height="5"><path d="M0 0h6l-3 3.500z" fill="#111"/></svg><div class="ibox" style="left:1151.5px;top:619px;width:37px;height:22px;background:#fff;border-color:#e6e6e6;color:#f01010;font-weight:bold;font-size:14px;line-height:21px;padding-right:3px;letter-spacing:-.5px">0</div><div class="ibox" style="left:1193px;top:619px;width:37px;height:22px;background:#fff;border-color:#e6e6e6;color:#10e010;font-weight:bold;font-size:14px;line-height:21px;padding-right:3px;letter-spacing:-.5px">0</div><div class="ibox" style="left:1235px;top:619px;width:37px;height:22px;background:#fff;border-color:#e6e6e6;color:#1010e0;font-weight:bold;font-size:14px;line-height:21px;padding-right:3px;letter-spacing:-.5px">0</div><div class="ibox" style="left:1276px;top:619px;width:37px;height:22px;background:#fff;border-color:#e6e6e6;color:#555;font-weight:normal;font-size:14px;line-height:21px;padding-right:3px;letter-spacing:-.5px">0</div><div class="ibox" style="left:1318px;top:619px;width:37px;height:22px;background:#fff;border-color:#e6e6e6;color:#555;font-weight:normal;font-size:14px;line-height:21px;padding-right:3px;letter-spacing:-.5px">0</div><div class="a" style="left:1375px;top:619px;width:54px;height:22px;border:1px solid #e4e4e4;background:#fbfbfb"></div><div class="t" style="left:1378px;top:624px;font-size:12px;letter-spacing:-.8px">NoUse</div><svg style="left:1418px;top:627px" width="7" height="5"><path d="M0 0h6l-3 3.500z" fill="#111"/></svg><div class="ghead" style="left:1141px;top:651px;width:300px;height:18px;line-height:18px">Barcode List</div><div class="a" style="left:1143px;top:676px;width:293px;height:218px;background:#fff;border:1px solid #b4b4b4"></div><div class="a" style="left:1144px;top:677px;width:291px;height:25px;background:#f4f4f4;border-bottom:1px solid #d0d0d0"></div><div class="a" style="left:1197px;top:677px;width:1px;height:25px;background:#a8a8a8"></div><div class="a" style="left:1197px;top:702px;width:1px;height:191px;background:#f0f0f0"></div><div class="a" style="left:1253px;top:677px;width:1px;height:25px;background:#a8a8a8"></div><div class="a" style="left:1253px;top:702px;width:1px;height:191px;background:#f0f0f0"></div><div class="a" style="left:1434px;top:677px;width:1px;height:25px;background:#a8a8a8"></div><div class="a" style="left:1434px;top:702px;width:1px;height:191px;background:#f0f0f0"></div><div class="a" style="left:1144px;top:723px;width:291px;height:1px;background:#efefef"></div><div class="a" style="left:1144px;top:743px;width:291px;height:1px;background:#efefef"></div><div class="a" style="left:1144px;top:764px;width:291px;height:1px;background:#efefef"></div><div class="a" style="left:1144px;top:784px;width:291px;height:1px;background:#efefef"></div><div class="a" style="left:1144px;top:805px;width:291px;height:1px;background:#efefef"></div><div class="a" style="left:1144px;top:826px;width:291px;height:1px;background:#efefef"></div><div class="a" style="left:1144px;top:846px;width:291px;height:1px;background:#efefef"></div><div class="a" style="left:1144px;top:867px;width:291px;height:1px;background:#efefef"></div><div class="a" style="left:1144px;top:887px;width:291px;height:1px;background:#efefef"></div><div class="t" style="left:1146px;top:685px;font-size:12px;letter-spacing:-.45px">Location</div><div class="t" style="left:1201px;top:685px;font-size:12px;letter-spacing:-.45px">state</div><div class="t" style="left:1256px;top:685px;font-size:12px;letter-spacing:-.45px">Barcode</div><div class="t" style="left:1149px;top:708px;font-size:12px;letter-spacing:-.45px">1</div><div class="t" style="left:1204px;top:707px;font-size:12px;letter-spacing:-.45px">-</div><div class="t" style="left:1259px;top:707px;font-size:12px;letter-spacing:-.45px">-</div><div class="a" style="left:1139px;top:905px;width:302px;height:1px;background:#a0a0a0"></div><div class="a" style="left:1139px;top:906px;width:302px;height:1px;background:#fff"></div><div class="btn" style="left:1262px;top:913px;width:87px;height:28px;line-height:26px">Test</div><div class="btn" style="left:1353px;top:913px;width:87px;height:28px;line-height:26px">Save</div>
<!-- 70_bottom.html -->
<div class="a" style="left:4px;top:732px;width:1041px;height:266px;background:#f0f0f0"></div><div class="ptitle" style="left:4px;top:736px;width:234px;height:21px;line-height:20px;font-size:12.500px;letter-spacing:-.5px;padding-left:0">图像截取[2/2]</div><div class="t" style="left:226px;top:740px;font-size:12px;color:#68b4ff">✕</div><div class="ptitle" style="left:242px;top:736px;width:803px;height:21px;line-height:20px;font-size:12.500px;letter-spacing:-.5px;padding-left:2px">不良焊盘图片</div><div class="t" style="left:1031px;top:740px;font-size:12px;color:#68b4ff">✕</div><div class="a" style="left:4px;top:757px;width:234px;height:241px;background:#f0f0f0"></div><div class="a" style="left:25px;top:759px;width:212px;height:196px;background:#fff;border:1px solid #b8b8b8"></div><div class="a" style="left:3px;top:763px;width:20px;height:26px;border:1px solid #7ab8f0;background:#cfe6fb"></div><div class="a" style="left:3px;top:795px;width:20px;height:26px;border:1px solid #c0c0c0;background:#f2f2f2"></div><svg style="left:3px;top:763px" width="20" height="60" viewBox="3 763 20 60"><path d="M6 770h9l3 3v9l-3 2H6z" fill="#f4dc40" stroke="#222" stroke-width="1.200"/><circle cx="12.500" cy="777" r="3.500" fill="#cfe4f8" stroke="#223" stroke-width="1.200"/><path d="M15 780l3 3" stroke="#223" stroke-width="1.600"/><rect x="6.500" y="802.500" width="12" height="13" rx="2" fill="#8ea2e6" stroke="#4e5fae"/><rect x="8" y="804" width="9" height="4" fill="#e8eefc"/><rect x="7" y="810" width="11" height="5" fill="#6a80d8"/></svg><div class="a" style="left:25px;top:955px;width:212px;height:20px;background:#f0f0f0;border-top:1px solid #777"></div><svg style="left:25px;top:955px" width="212" height="20" viewBox="25 955 212 20"><path d="M25 956H237" stroke="#8a8a8a"/><path d="M37 972.500l4.500-16" stroke="#666" fill="none"/><path d="M42 956v16.500h56l5-16.500" stroke="#777" fill="#f8f8f8"/><path d="M104 955.500l-4.500 17h38l5-17z" fill="#fff" stroke="none"/><path d="M138 972.500l5-16.500" stroke="#666"/><path d="M143 956v16.500h59l3-9" stroke="#777" fill="#f8f8f8"/><path d="M215 960v7l-4-3.500z" fill="#111"/><path d="M225 959.500v8l4.500-4z" fill="none" stroke="#555"/></svg><div class="t" style="left:25px;top:958px;width:8px;overflow:hidden;direction:rtl;font-size:12px">象</div><div class="t" style="left:47.500px;top:959px;font-size:11.500px;letter-spacing:-.75px">FIDUCIAL</div><div class="t" style="left:108px;top:958px;font-size:12px;font-weight:bold;letter-spacing:-.5px">条码</div><div class="t" style="left:148px;top:959px;font-size:11.500px;letter-spacing:-.95px">BADMARK</div><div class="a" style="left:25px;top:976px;width:212px;height:21px;background:#f2f2f2;border:1px solid #dadada"></div><svg style="left:25px;top:977px" width="212" height="20" viewBox="25 977 212 20"><path d="M36 982.500v8l-4-4z" fill="#8a8a8a"/><path d="M226 982.500v8l4-4z" fill="#8a8a8a"/></svg><div class="a" style="left:243px;top:757px;width:802px;height:241px;background:#f0f0f0"></div><div class="a" style="left:243px;top:968px;width:802px;height:30px;background:#fcfcfc"></div><div class="a" style="left:268px;top:759px;width:776px;height:209px;background:#fff;border:1px solid #b8b8b8"></div><div class="a" style="left:244px;top:761px;width:22px;height:27px;border:1px solid #7ab8f0;background:#cfe6fb"></div><div class="a" style="left:244px;top:791px;width:22px;height:26px;border:1px solid #c0c0c0;background:#f2f2f2"></div><svg style="left:244px;top:761px" width="22" height="58" viewBox="244 761 22 58"><path d="M249 772a6 6 0 0 1 10-3l2-2v6h-6l2-2a3.500 3.500 0 0 0-5.500 1.500z" fill="#30c030" stroke="#106010" stroke-width=".8"/><path d="M261 777a6 6 0 0 1-10 3l-2 2v-6h6l-2 2a3.500 3.500 0 0 0 5.500-1.500z" fill="#30c030" stroke="#106010" stroke-width=".8"/><rect x="249.500" y="797.500" width="12" height="13" rx="2" fill="#8ea2e6" stroke="#4e5fae"/><rect x="251" y="799" width="9" height="4" fill="#e8eefc"/><rect x="250" y="805" width="11" height="5" fill="#6a80d8"/></svg><div class="a" style="left:269px;top:926px;width:774px;height:20px;background:#f0f0f0;border-top:2px solid #6a6a6a"></div><svg style="left:269px;top:927px" width="774" height="19" viewBox="269 927 774 19"><path d="M269 928h49l6 0-6 16h-49z" fill="#fff"/><path d="M318 944l6-16" stroke="#666"/><path d="M270 944.500h48" stroke="#999"/><path d="M324 944.500h42l6-16" stroke="#777" fill="none"/><path d="M1022 932v8l-4-4z" fill="none" stroke="#666"/><path d="M1031 932v8l4-4z" fill="none" stroke="#666"/></svg><div class="t" style="left:275px;top:931px;font-size:12.500px;font-weight:bold;letter-spacing:-.4px">Lane 1</div><div class="t" style="left:328px;top:931px;font-size:12.500px;letter-spacing:-.4px">Lane 2</div><div class="a" style="left:269px;top:947px;width:774px;height:19px;background:#f2f2f2;border-top:1px solid #c8c8c8"></div><div class="a" style="left:286px;top:948px;width:294px;height:17px;background:linear-gradient(#e8e8e8,#d0d0d0);border:1px solid #b0b0b0;border-radius:1px"></div><svg style="left:269px;top:947px" width="774" height="19" viewBox="269 947 774 19"><path d="M279 952.500v7l-4-3.500z" fill="#444"/><path d="M1033 952.500v7l4-3.500z" fill="#444"/><path d="M430 953v6M433 953v6M436 953v6" stroke="#555" stroke-width="1"/></svg><div class="a" style="left:243px;top:972px;width:802px;height:1px;background:#cfcfcf"></div><div class="t" style="left:248px;top:980px;font-size:12px;color:#a0a0a0;letter-spacing:-.9px">检查结果清单</div><div class="a" style="left:316px;top:975px;width:1px;height:20px;background:#d8d8d8"></div><div class="t" style="left:321px;top:980px;font-size:12px;color:#a8a8a8;letter-spacing:-.9px">3D侧面图</div><div class="a" style="left:369px;top:974px;width:73px;height:22px;background:#fff;border:1px solid #8a8a8a;border-top:none"></div><div class="t" style="left:372px;top:980px;font-size:12px;color:#000;letter-spacing:-.9px">不良焊盘图片</div><div class="a" style="left:2px;top:674px;width:16px;height:62px;background:radial-gradient(ellipse at 0% 65%,rgba(0,0,0,.7),rgba(0,0,0,.25) 40%,rgba(0,0,0,0) 72%)"></div><div class="a" style="left:0;top:745px;width:3px;height:253px;background:linear-gradient(to right,#9cc4ee,#eef5fc)"></div><div class="a" style="left:0;top:998px;width:53px;height:3px;background:#222"></div><div class="a" style="left:53px;top:998px;width:53px;height:3px;background:linear-gradient(#d8d8d8,#9a9a9a)"></div><svg style="left:0;top:1001px" width="30" height="80"><path d="M0 1h28L14.500 13H6V20.500L0 26z" fill="#cfe4f8"/></svg>
</div>
</body></html>
